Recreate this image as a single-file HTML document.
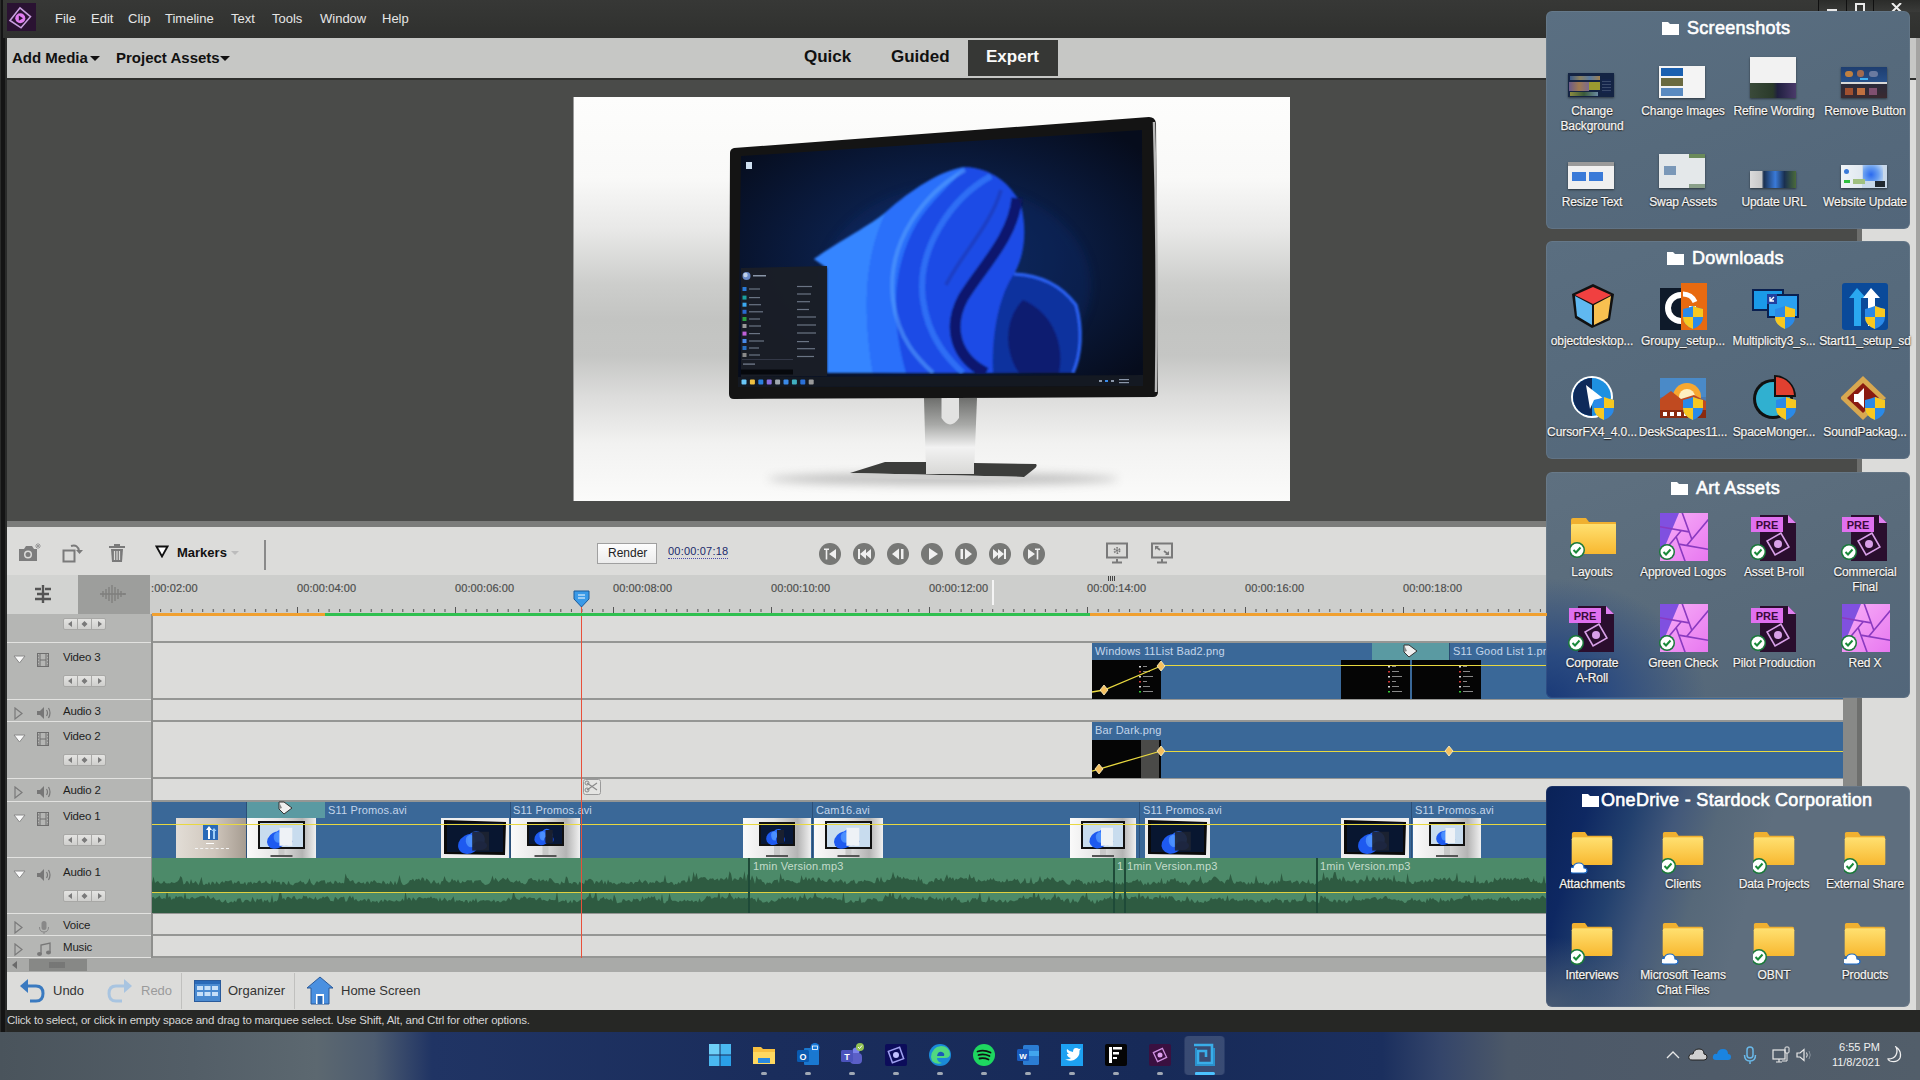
<!DOCTYPE html><html><head><meta charset="utf-8"><style>
*{margin:0;padding:0;box-sizing:border-box}
html,body{width:1920px;height:1080px;overflow:hidden;background:#1c1c1c;font-family:"Liberation Sans",sans-serif}
.a{position:absolute}
.menu span{position:absolute;top:11px;font-size:13px;color:#e6e6e6}
.tname{position:absolute;font-size:11.5px;letter-spacing:-0.2px;color:#1e1e1e;white-space:nowrap}
.tl{position:absolute;top:582px;font-size:11px;color:#4e4e4e;white-space:nowrap;letter-spacing:0.1px;-webkit-text-stroke:0.2px #4e4e4e}
.clab{position:absolute;font-size:11px;color:#c3d5ea;white-space:nowrap;letter-spacing:0.15px}
.alab{position:absolute;font-size:11px;color:#c4dccb;white-space:nowrap;letter-spacing:0.15px}
.fence{position:absolute;left:1546px;width:364px;border-radius:6px;overflow:hidden;box-shadow:inset 0 0 0 1px rgba(255,255,255,0.07)}
.ftitle{position:absolute;left:0;width:100%;text-align:center;color:#fff;font-size:17px;font-weight:bold;white-space:nowrap}
.flab{position:absolute;width:96px;text-align:center;color:#f4f4f4;font-size:12px;line-height:15px;-webkit-text-stroke:0.25px #f4f4f4;text-shadow:0 1px 1px #1a1a1a,0 0 2px #222;white-space:nowrap;letter-spacing:-0.1px}
</style></head><body>
<div class="a" style="left:0px;top:0px;width:7px;height:1032px;background:#2a2b2a;"></div>
<div class="a" style="left:1px;top:0px;width:4px;height:1032px;background:#141414;"></div>
<div class="a" style="left:3px;top:0px;width:1917px;height:38px;background:linear-gradient(#373836,#2f302e);"></div>
<div class="a" style="left:7px;top:3px;width:29px;height:28px;background:#2a1232;"></div>
<svg class="a" style="left:7px;top:3px" width="29" height="28" viewBox="0 0 29 28"><path d="M3 17.5 L13 4.8 L23.5 13.7 L14 24.8Z" fill="none" stroke="#c9a0e0" stroke-width="1.6"/><circle cx="13.3" cy="15.2" r="5" fill="#e07cf0"/><path d="M11.8 12.6 L16 15.2 L11.8 17.8Z" fill="#2a1232"/></svg>
<div class="menu">
<span style="left:55px">File</span>
<span style="left:91px">Edit</span>
<span style="left:128px">Clip</span>
<span style="left:165px">Timeline</span>
<span style="left:231px">Text</span>
<span style="left:272px">Tools</span>
<span style="left:320px">Window</span>
<span style="left:382px">Help</span>
</div>
<div class="a" style="left:1818px;top:0px;width:102px;height:12px;background:linear-gradient(#2b2c2a,#3a3b39);"></div>
<div class="a" style="left:1818px;top:0px;width:1px;height:12px;background:#101010;"></div>
<div class="a" style="left:1846px;top:0px;width:1px;height:12px;background:#101010;"></div>
<div class="a" style="left:1873px;top:0px;width:1px;height:12px;background:#101010;"></div>
<div class="a" style="left:1827px;top:9px;width:10px;height:2px;background:#e8e8e8;"></div>
<div class="a" style="left:1855px;top:3px;width:10px;height:8px;border:2px solid #e8e8e8;border-bottom:none"></div>
<svg class="a" style="left:1891px;top:3px" width="11" height="9"><path d="M1 0 L10 9 M10 0 L1 9" stroke="#eee" stroke-width="2"/></svg>
<div class="a" style="left:7px;top:38px;width:1913px;height:40px;background:#c6c7c5;"></div>
<div class="a" style="left:7px;top:78px;width:1913px;height:2px;background:#2e2f2d;"></div>
<div class="a" style="left:12px;top:49px;font-size:15px;color:#111;font-weight:bold;white-space:nowrap;">Add Media</div>
<div class="a" style="left:90px;top:56px;border-left:5px solid transparent;border-right:5px solid transparent;border-top:5px solid #111"></div>
<div class="a" style="left:116px;top:49px;font-size:15px;color:#111;font-weight:bold;white-space:nowrap;">Project Assets</div>
<div class="a" style="left:220px;top:56px;border-left:5px solid transparent;border-right:5px solid transparent;border-top:5px solid #111"></div>
<div class="a" style="left:804px;top:47px;font-size:17px;color:#111;font-weight:bold;white-space:nowrap;">Quick</div>
<div class="a" style="left:891px;top:47px;font-size:17px;color:#111;font-weight:bold;white-space:nowrap;">Guided</div>
<div class="a" style="left:968px;top:40px;width:90px;height:36px;background:#363735;"></div>
<div class="a" style="left:986px;top:47px;font-size:17px;color:#fafafa;font-weight:bold;white-space:nowrap;">Expert</div>
<div class="a" style="left:7px;top:80px;width:1850px;height:441px;background:#4a4b49;"></div>
<div class="a" style="left:1857px;top:80px;width:5px;height:878px;background:#6d6e6c;"></div>
<div class="a" style="left:1862px;top:80px;width:54px;height:892px;background:#dcdcda;"></div>
<div class="a" style="left:1862px;top:38px;width:54px;height:40px;background:#c6c7c5;"></div>
<div class="a" style="left:1916px;top:38px;width:4px;height:994px;background:#a4a4a2;"></div>
<div class="a" style="left:573px;top:97px;width:717px;height:404px;background:linear-gradient(#fdfdfc 0%,#f9f9f8 20%,#e8e8e7 33%,#cdcecc 46%,#c3c4c2 55%,#c5c6c4 64%,#dcdcdb 74%,#f2f2f1 86%,#fbfbfa 100%);border-left:1px solid #9a9a9a;overflow:hidden">
<svg width="717" height="403" viewBox="573 97 717 403" style="position:absolute;left:0;top:0">
<defs>
<radialGradient id="scr" cx="0.5" cy="0.5" r="0.65"><stop offset="0" stop-color="#123068"/><stop offset="0.45" stop-color="#0b1e46"/><stop offset="1" stop-color="#060c1c"/></radialGradient>
<linearGradient id="neck" x1="0" y1="0" x2="0" y2="1"><stop offset="0" stop-color="#6e6f6d"/><stop offset="0.35" stop-color="#a8a9a7"/><stop offset="0.65" stop-color="#f2f2f2"/><stop offset="1" stop-color="#d8d8d6"/></linearGradient>
<radialGradient id="bloom" cx="0.5" cy="0.5" r="0.5"><stop offset="0" stop-color="#2f6bff"/><stop offset="0.6" stop-color="#1d4fe0"/><stop offset="1" stop-color="#0d2a90"/></radialGradient>
</defs>
<ellipse cx="942" cy="479" rx="175" ry="6" fill="#7a7a7a" opacity="0.45" filter="url(#bl2)"/>
<path d="M923 398 L976 398 L973 474 L925 474Z" fill="url(#neck)"/>
<path d="M940.5 398 L958 398 L958 418 Q949 431 940.5 418Z" fill="#e2e2e1"/>
<path d="M884 462 L925 462 L925 474 L973 474 L973 463 L1035 464 Q1037 466 1033 469 L1023 477 L849 473Z" fill="#3c3d3b"/>
<path d="M849 473 L1023 477 L1018 481 L856 478Z" fill="#cfcfce"/>
<path d="M733 148 L1148 117 Q1154 117 1155 123 L1157 392 Q1157 397 1152 397 L733 399 Q728 399 728 394 L729 153 Q729 149 733 148Z" fill="#141414"/>
<path d="M1153 122 Q1157 255 1155 392" stroke="#b8b8b8" stroke-width="2.5" fill="none"/>
<path d="M740 156 L1141 130 L1142 386 L737 387Z" fill="url(#scr)"/>

<clipPath id="sc"><path d="M740 156 L1141 130 L1142 373 L737 375Z"/></clipPath><filter id="bl"><feGaussianBlur stdDeviation="2.2"/></filter><filter id="bl1"><feGaussianBlur stdDeviation="1.3"/></filter><g clip-path="url(#sc)">
<filter id="bl2" x="-50%" y="-300%" width="200%" height="700%"><feGaussianBlur stdDeviation="5"/></filter>
<ellipse cx="955" cy="285" rx="135" ry="100" fill="#0f2660" opacity="0.45" filter="url(#bl2)"/>
<g filter="url(#bl1)">
<path d="M813 259 C 840 240, 870 225, 885 212 C 910 190, 940 170, 964 167 C 990 168, 1010 183, 1020 205 C 1026 230, 1024 255, 1013 274 C 1040 275, 1060 285, 1075 305 C 1082 330, 1080 355, 1072 373 L 826 373 L 826 268Z" fill="#1d4ce6"/>
<path d="M813 259 C 840 240, 870 225, 885 212 C 870 245, 858 290, 872 373 L 826 373 L 826 268Z" fill="#3585ff"/>
<path d="M885 212 C 870 245, 858 290, 872 373 L 905 373 C 890 320, 890 270, 915 225 C 930 200, 950 185, 964 167 C 940 170, 910 190, 885 212Z" fill="#2a70fa"/>
<path d="M964 170 C 925 192, 885 240, 892 300 C 897 340, 918 360, 932 373" fill="none" stroke="#5aa6ff" stroke-width="4" opacity="0.55"/>
<path d="M990 176 C 950 198, 915 250, 922 300 C 927 338, 948 360, 962 373" fill="none" stroke="#3a86ff" stroke-width="6" opacity="0.6"/>
<path d="M1016 198 C 1012 238, 980 268, 962 298 C 946 328, 955 358, 985 373" fill="none" stroke="#0a1460" stroke-width="11" opacity="0.9"/>
<path d="M1000 190 C 990 225, 960 255, 945 285" fill="none" stroke="#1a3ab8" stroke-width="4" opacity="0.7"/>
<path d="M1013 274 C 1040 275, 1060 285, 1075 305 C 1082 330, 1080 355, 1072 373 L 992 373 C 990 335, 998 295, 1013 274Z" fill="#11309e"/>
<path d="M1022 300 C 1004 318, 1002 350, 1018 373 L 1058 373 C 1064 342, 1050 312, 1022 300Z" fill="#0a1c70"/>
<path d="M1013 274 C 1040 275, 1060 285, 1075 305 C 1082 330, 1080 355, 1072 373" fill="none" stroke="#2a62f4" stroke-width="3"/>
</g>
</g><path d="M740 268 L826 266 L826 376 L740 377Z" fill="#1a1e26" opacity="0.96"/><circle cx="745.5" cy="276" r="4" fill="#6a8ac8"/><circle cx="744.5" cy="275" r="2.2" fill="#c0d0e8"/><rect x="752" y="275" width="13" height="1.5" fill="#8a96a8"/><rect x="741.5" y="287" width="4" height="4" fill="#2a7ad8"/><rect x="748" y="288.4" width="11" height="1.2" fill="#6a7484"/><rect x="741.5" y="295.6" width="4" height="4" fill="#1aa0a0"/><rect x="748" y="297.0" width="11" height="1.2" fill="#6a7484"/><rect x="741.5" y="302.7" width="4" height="4" fill="#3aa8f0"/><rect x="748" y="304.09999999999997" width="12" height="1.2" fill="#6a7484"/><rect x="741.5" y="309.8" width="4" height="4" fill="#2a6ad0"/><rect x="748" y="311.2" width="14" height="1.2" fill="#6a7484"/><rect x="741.5" y="317" width="4" height="4" fill="#2aa040"/><rect x="748" y="318.4" width="11" height="1.2" fill="#6a7484"/><rect x="741.5" y="324" width="4" height="4" fill="#9a9a9a"/><rect x="748" y="325.4" width="12" height="1.2" fill="#6a7484"/><rect x="741.5" y="331.6" width="4" height="4" fill="#c060d8"/><rect x="748" y="333.0" width="11" height="1.2" fill="#6a7484"/><rect x="741.5" y="339" width="4" height="4" fill="#4a8ae8"/><rect x="748" y="340.4" width="15" height="1.2" fill="#6a7484"/><rect x="741.5" y="346" width="4" height="4" fill="#2a70c0"/><rect x="748" y="347.4" width="10" height="1.2" fill="#6a7484"/><rect x="741.5" y="353" width="4" height="4" fill="#8a8a8a"/><rect x="748" y="354.4" width="11" height="1.2" fill="#6a7484"/><rect x="796" y="285.9" width="15" height="1.2" fill="#6a7484"/><rect x="796" y="293.4" width="14" height="1.2" fill="#6a7484"/><rect x="796" y="301.09999999999997" width="13" height="1.2" fill="#6a7484"/><rect x="796" y="308.9" width="12" height="1.2" fill="#6a7484"/><rect x="796" y="316.4" width="19" height="1.2" fill="#6a7484"/><rect x="796" y="324.4" width="19" height="1.2" fill="#6a7484"/><rect x="796" y="332.4" width="19" height="1.2" fill="#6a7484"/><rect x="796" y="341.0" width="12" height="1.2" fill="#6a7484"/><rect x="796" y="348.09999999999997" width="18" height="1.2" fill="#6a7484"/><rect x="796" y="355.9" width="17" height="1.2" fill="#6a7484"/><rect x="741" y="359" width="51" height="0.8" fill="#3a4050"/><rect x="742" y="363.5" width="12" height="1.2" fill="#7a8494"/><rect x="740" y="369.5" width="52" height="5" fill="#06080c"/><path d="M737 377 L1142 375 L1142 386 L737 387Z" fill="#141922"/><rect x="740.5" y="379.5" width="5" height="5" rx="1" fill="#6ac8f8"/><rect x="748.9" y="379.5" width="5" height="5" rx="1" fill="#f0c040"/><rect x="757.3" y="379.5" width="5" height="5" rx="1" fill="#2a80e0"/><rect x="765.7" y="379.5" width="5" height="5" rx="1" fill="#8a70e0"/><rect x="774.1" y="379.5" width="5" height="5" rx="1" fill="#a0a8b0"/><rect x="782.5" y="379.5" width="5" height="5" rx="1" fill="#3a8ae8"/><rect x="790.9" y="379.5" width="5" height="5" rx="1" fill="#40b0c0"/><rect x="799.3" y="379.5" width="5" height="5" rx="1" fill="#2a70d8"/><rect x="807.7" y="379.5" width="5" height="5" rx="1" fill="#9a9a9a"/><g fill="#8a96a8"><rect x="1098" y="380" width="3" height="2"/><rect x="1104" y="380" width="3" height="2" fill="#3a8ae8"/><rect x="1110" y="380" width="3" height="2"/><rect x="1118" y="379" width="10" height="1.2"/><rect x="1118" y="382" width="10" height="1.2"/></g><rect x="745" y="162" width="6" height="7" fill="#cfe0f0"/>
</svg>
</div>
<div class="a" style="left:7px;top:521px;width:1855px;height:6px;background:#7b7c7a;"></div>
<div class="a" style="left:7px;top:527px;width:1855px;height:48px;background:#dcdcda;"></div>
<svg class="a" style="left:17px;top:541px" width="26" height="22" viewBox="0 0 26 22"><path d="M2 8 L7 8 L9 5 L15 5 L17 8 L20 8 L20 20 L2 20Z" fill="#7d7d7d"/><circle cx="11" cy="13.5" r="4" fill="#dcdcda"/><circle cx="11" cy="13.5" r="2.5" fill="#7d7d7d"/><path d="M21 2 L21 8 M18 5 L24 5 M19 3 L23 7 M23 3 L19 7" stroke="#9a9a9a" stroke-width="1"/></svg>
<svg class="a" style="left:62px;top:542px" width="24" height="22" viewBox="0 0 24 22"><rect x="1.5" y="8.5" width="11" height="11" fill="none" stroke="#7a7a7a" stroke-width="2"/><path d="M9 4 Q16 2 17 9" fill="none" stroke="#7a7a7a" stroke-width="2"/><path d="M14 8 L17.5 12 L21 8Z" fill="#7a7a7a"/></svg>
<svg class="a" style="left:108px;top:543px" width="18" height="20" viewBox="0 0 18 20"><rect x="1" y="3" width="16" height="2" fill="#7a7a7a"/><rect x="6" y="1" width="6" height="2" fill="#7a7a7a"/><path d="M3 6 L15 6 L14 19 L4 19Z" fill="#7a7a7a"/><path d="M6.5 8 L6.5 17 M9 8 L9 17 M11.5 8 L11.5 17" stroke="#dcdcda" stroke-width="1.2"/></svg>
<svg class="a" style="left:155px;top:545px" width="14" height="13" viewBox="0 0 14 13"><path d="M1.5 1.5 L12.5 1.5 L7 11.5Z" fill="#fff" stroke="#111" stroke-width="1.8"/></svg>
<div class="a" style="left:177px;top:545px;font-size:13px;color:#111;font-weight:bold;white-space:nowrap;">Markers</div>
<svg class="a" style="left:231px;top:551px" width="8" height="5"><path d="M0 0 L8 0 L4 4Z" fill="#bcbcbc"/></svg>
<div class="a" style="left:264px;top:540px;width:2px;height:30px;background:#8a8a8a;"></div>
<div class="a" style="left:597px;top:543px;width:60px;height:21px;background:linear-gradient(#fdfdfd,#ececec);border:1px solid #a0a0a0"></div>
<div class="a" style="left:608px;top:546px;font-size:12px;color:#222;font-weight:normal;white-space:nowrap;">Render</div>
<div class="a" style="left:668px;top:545px;font-size:11px;color:#1a2a6a;font-weight:normal;white-space:nowrap;letter-spacing:0.2px">00:00:07:18</div>
<div class="a" style="left:668px;top:558px;width:60px;border-top:1px dotted #4a4aaa"></div>
<svg class="a" style="left:818px;top:542px" width="24" height="24" viewBox="-12 -12 24 24"><circle r="11" fill="#777876"/><path d="M-6 -5.5 L-1 -5.5 L-1 -4 L-2.7 -4 L-2.7 5.5 L-4.3 5.5 L-4.3 -4 L-6 -4Z M6 -5 L6 5 L-1 0Z" fill="#f0f0f0"/></svg>
<svg class="a" style="left:852px;top:542px" width="24" height="24" viewBox="-12 -12 24 24"><circle r="11" fill="#777876"/><path d="M-6 -5 L-4 -5 L-4 5 L-6 5Z M2 -5 L2 5 L-4 0Z M7 -5 L7 5 L1 0Z" fill="#f0f0f0"/></svg>
<svg class="a" style="left:886px;top:542px" width="24" height="24" viewBox="-12 -12 24 24"><circle r="11" fill="#777876"/><path d="M1 -5.5 L1 5.5 L-6 0Z M3 -5 L5.5 -5 L5.5 5 L3 5Z" fill="#f0f0f0"/></svg>
<svg class="a" style="left:920px;top:542px" width="24" height="24" viewBox="-12 -12 24 24"><circle r="11" fill="#777876"/><path d="M-3 -6 L6 0 L-3 6Z" fill="#f0f0f0"/></svg>
<svg class="a" style="left:954px;top:542px" width="24" height="24" viewBox="-12 -12 24 24"><circle r="11" fill="#777876"/><path d="M-1 -5.5 L-1 5.5 L6 0Z M-5.5 -5 L-3 -5 L-3 5 L-5.5 5Z" fill="#f0f0f0"/></svg>
<svg class="a" style="left:988px;top:542px" width="24" height="24" viewBox="-12 -12 24 24"><circle r="11" fill="#777876"/><path d="M-7 -5 L-7 5 L-1 0Z M-2 -5 L-2 5 L4 0Z M4 -5 L6 -5 L6 5 L4 5Z" fill="#f0f0f0"/></svg>
<svg class="a" style="left:1022px;top:542px" width="24" height="24" viewBox="-12 -12 24 24"><circle r="11" fill="#777876"/><path d="M6 -5.5 L1 -5.5 L1 -4 L2.7 -4 L2.7 5.5 L4.3 5.5 L4.3 -4 L6 -4Z M-6 -5 L-6 5 L1 0Z" fill="#f0f0f0"/></svg>
<svg class="a" style="left:1105px;top:542px" width="24" height="22" viewBox="0 0 24 22"><rect x="2" y="1.5" width="20" height="14" fill="none" stroke="#7a7a7a" stroke-width="2"/><path d="M12 17 L12 20 M7 20.5 L17 20.5" stroke="#7a7a7a" stroke-width="2"/><circle cx="12" cy="8.5" r="2.6" fill="none" stroke="#7a7a7a" stroke-width="1.8" stroke-dasharray="1.6 1.2"/><circle cx="12" cy="8.5" r="1.2" fill="#7a7a7a"/></svg>
<svg class="a" style="left:1150px;top:542px" width="24" height="22" viewBox="0 0 24 22"><rect x="2" y="1.5" width="20" height="14" fill="none" stroke="#7a7a7a" stroke-width="2"/><path d="M12 17 L12 20 M7 20.5 L17 20.5" stroke="#7a7a7a" stroke-width="2"/><path d="M5.5 4.5 L10 8 M14 9 L18.5 12.5" stroke="#7a7a7a" stroke-width="1.8"/><path d="M5 4 L9 4 L5 8Z M19 13 L15 13 L19 9Z" fill="#7a7a7a"/></svg>
<div class="a" style="left:7px;top:575px;width:71px;height:39px;background:#d2d3d1;"></div>
<div class="a" style="left:78px;top:575px;width:72px;height:39px;background:#9d9e9c;"></div>
<div class="a" style="left:150px;top:575px;width:1693px;height:39px;background:#cdcecc;"></div>
<svg class="a" style="left:32px;top:583px" width="22" height="22" viewBox="0 0 22 22"><path d="M3 6 L9 6 M13 6 L19 6 M5 11 L17 11 M3 16 L19 16 M11 2 L11 20" stroke="#555" stroke-width="2.4"/></svg>
<svg class="a" style="left:98px;top:583px" width="30" height="22" viewBox="0 0 30 22"><path d="M2 11 L28 11 M5 8 L5 14 M8 6 L8 16 M11 4 L11 18 M14 2 L14 20 M17 4 L17 18 M20 6 L20 16 M23 8 L23 14 M26 10 L26 12" stroke="#7e7e7c" stroke-width="1.3"/></svg>
<svg class="a" style="left:0;top:0" width="1920" height="1080"><g fill="#555"><rect x="160.1" y="609" width="1" height="3"/><rect x="170.6" y="609" width="1" height="3"/><rect x="181.1" y="609" width="1" height="3"/><rect x="191.7" y="609" width="1" height="3"/><rect x="202.2" y="609" width="1" height="3"/><rect x="212.7" y="609" width="1" height="3"/><rect x="223.3" y="609" width="1" height="3"/><rect x="233.8" y="609" width="1" height="3"/><rect x="244.3" y="609" width="1" height="3"/><rect x="254.9" y="609" width="1" height="3"/><rect x="265.4" y="609" width="1" height="3"/><rect x="275.9" y="609" width="1" height="3"/><rect x="286.5" y="609" width="1" height="3"/><rect x="297.0" y="607" width="1" height="6"/><rect x="307.5" y="609" width="1" height="3"/><rect x="318.1" y="609" width="1" height="3"/><rect x="328.6" y="609" width="1" height="3"/><rect x="339.1" y="609" width="1" height="3"/><rect x="349.7" y="609" width="1" height="3"/><rect x="360.2" y="609" width="1" height="3"/><rect x="370.7" y="609" width="1" height="3"/><rect x="381.3" y="609" width="1" height="3"/><rect x="391.8" y="609" width="1" height="3"/><rect x="402.3" y="609" width="1" height="3"/><rect x="412.9" y="609" width="1" height="3"/><rect x="423.4" y="609" width="1" height="3"/><rect x="433.9" y="609" width="1" height="3"/><rect x="444.5" y="609" width="1" height="3"/><rect x="455.0" y="607" width="1" height="6"/><rect x="465.5" y="609" width="1" height="3"/><rect x="476.1" y="609" width="1" height="3"/><rect x="486.6" y="609" width="1" height="3"/><rect x="497.1" y="609" width="1" height="3"/><rect x="507.7" y="609" width="1" height="3"/><rect x="518.2" y="609" width="1" height="3"/><rect x="528.7" y="609" width="1" height="3"/><rect x="539.3" y="609" width="1" height="3"/><rect x="549.8" y="609" width="1" height="3"/><rect x="560.3" y="609" width="1" height="3"/><rect x="570.9" y="609" width="1" height="3"/><rect x="581.4" y="609" width="1" height="3"/><rect x="591.9" y="609" width="1" height="3"/><rect x="602.5" y="609" width="1" height="3"/><rect x="613.0" y="607" width="1" height="6"/><rect x="623.5" y="609" width="1" height="3"/><rect x="634.1" y="609" width="1" height="3"/><rect x="644.6" y="609" width="1" height="3"/><rect x="655.1" y="609" width="1" height="3"/><rect x="665.7" y="609" width="1" height="3"/><rect x="676.2" y="609" width="1" height="3"/><rect x="686.7" y="609" width="1" height="3"/><rect x="697.3" y="609" width="1" height="3"/><rect x="707.8" y="609" width="1" height="3"/><rect x="718.3" y="609" width="1" height="3"/><rect x="728.9" y="609" width="1" height="3"/><rect x="739.4" y="609" width="1" height="3"/><rect x="749.9" y="609" width="1" height="3"/><rect x="760.5" y="609" width="1" height="3"/><rect x="771.0" y="607" width="1" height="6"/><rect x="781.5" y="609" width="1" height="3"/><rect x="792.1" y="609" width="1" height="3"/><rect x="802.6" y="609" width="1" height="3"/><rect x="813.1" y="609" width="1" height="3"/><rect x="823.7" y="609" width="1" height="3"/><rect x="834.2" y="609" width="1" height="3"/><rect x="844.7" y="609" width="1" height="3"/><rect x="855.3" y="609" width="1" height="3"/><rect x="865.8" y="609" width="1" height="3"/><rect x="876.3" y="609" width="1" height="3"/><rect x="886.9" y="609" width="1" height="3"/><rect x="897.4" y="609" width="1" height="3"/><rect x="907.9" y="609" width="1" height="3"/><rect x="918.5" y="609" width="1" height="3"/><rect x="929.0" y="607" width="1" height="6"/><rect x="939.5" y="609" width="1" height="3"/><rect x="950.1" y="609" width="1" height="3"/><rect x="960.6" y="609" width="1" height="3"/><rect x="971.1" y="609" width="1" height="3"/><rect x="981.7" y="609" width="1" height="3"/><rect x="992.2" y="609" width="1" height="3"/><rect x="1002.7" y="609" width="1" height="3"/><rect x="1013.3" y="609" width="1" height="3"/><rect x="1023.8" y="609" width="1" height="3"/><rect x="1034.3" y="609" width="1" height="3"/><rect x="1044.9" y="609" width="1" height="3"/><rect x="1055.4" y="609" width="1" height="3"/><rect x="1065.9" y="609" width="1" height="3"/><rect x="1076.5" y="609" width="1" height="3"/><rect x="1087.0" y="607" width="1" height="6"/><rect x="1097.5" y="609" width="1" height="3"/><rect x="1108.1" y="609" width="1" height="3"/><rect x="1118.6" y="609" width="1" height="3"/><rect x="1129.1" y="609" width="1" height="3"/><rect x="1139.7" y="609" width="1" height="3"/><rect x="1150.2" y="609" width="1" height="3"/><rect x="1160.7" y="609" width="1" height="3"/><rect x="1171.3" y="609" width="1" height="3"/><rect x="1181.8" y="609" width="1" height="3"/><rect x="1192.3" y="609" width="1" height="3"/><rect x="1202.9" y="609" width="1" height="3"/><rect x="1213.4" y="609" width="1" height="3"/><rect x="1223.9" y="609" width="1" height="3"/><rect x="1234.5" y="609" width="1" height="3"/><rect x="1245.0" y="607" width="1" height="6"/><rect x="1255.5" y="609" width="1" height="3"/><rect x="1266.1" y="609" width="1" height="3"/><rect x="1276.6" y="609" width="1" height="3"/><rect x="1287.1" y="609" width="1" height="3"/><rect x="1297.7" y="609" width="1" height="3"/><rect x="1308.2" y="609" width="1" height="3"/><rect x="1318.7" y="609" width="1" height="3"/><rect x="1329.3" y="609" width="1" height="3"/><rect x="1339.8" y="609" width="1" height="3"/><rect x="1350.3" y="609" width="1" height="3"/><rect x="1360.9" y="609" width="1" height="3"/><rect x="1371.4" y="609" width="1" height="3"/><rect x="1381.9" y="609" width="1" height="3"/><rect x="1392.5" y="609" width="1" height="3"/><rect x="1403.0" y="607" width="1" height="6"/><rect x="1413.5" y="609" width="1" height="3"/><rect x="1424.1" y="609" width="1" height="3"/><rect x="1434.6" y="609" width="1" height="3"/><rect x="1445.1" y="609" width="1" height="3"/><rect x="1455.7" y="609" width="1" height="3"/><rect x="1466.2" y="609" width="1" height="3"/><rect x="1476.7" y="609" width="1" height="3"/><rect x="1487.3" y="609" width="1" height="3"/><rect x="1497.8" y="609" width="1" height="3"/><rect x="1508.3" y="609" width="1" height="3"/><rect x="1518.9" y="609" width="1" height="3"/><rect x="1529.4" y="609" width="1" height="3"/><rect x="1539.9" y="609" width="1" height="3"/><rect x="1550.5" y="609" width="1" height="3"/><rect x="1561.0" y="607" width="1" height="6"/><rect x="1571.5" y="609" width="1" height="3"/><rect x="1582.1" y="609" width="1" height="3"/><rect x="1592.6" y="609" width="1" height="3"/><rect x="1603.1" y="609" width="1" height="3"/><rect x="1613.7" y="609" width="1" height="3"/><rect x="1624.2" y="609" width="1" height="3"/><rect x="1634.7" y="609" width="1" height="3"/><rect x="1645.3" y="609" width="1" height="3"/><rect x="1655.8" y="609" width="1" height="3"/><rect x="1666.3" y="609" width="1" height="3"/><rect x="1676.9" y="609" width="1" height="3"/><rect x="1687.4" y="609" width="1" height="3"/><rect x="1697.9" y="609" width="1" height="3"/><rect x="1708.5" y="609" width="1" height="3"/><rect x="1719.0" y="607" width="1" height="6"/><rect x="1729.5" y="609" width="1" height="3"/><rect x="1740.1" y="609" width="1" height="3"/><rect x="1750.6" y="609" width="1" height="3"/><rect x="1761.1" y="609" width="1" height="3"/><rect x="1771.7" y="609" width="1" height="3"/><rect x="1782.2" y="609" width="1" height="3"/><rect x="1792.7" y="609" width="1" height="3"/><rect x="1803.3" y="609" width="1" height="3"/><rect x="1813.8" y="609" width="1" height="3"/><rect x="1824.3" y="609" width="1" height="3"/><rect x="1834.9" y="609" width="1" height="3"/></g></svg>
<div class="tl" style="left:297px">00:00:04:00</div>
<div class="tl" style="left:455px">00:00:06:00</div>
<div class="tl" style="left:613px">00:00:08:00</div>
<div class="tl" style="left:771px">00:00:10:00</div>
<div class="tl" style="left:929px">00:00:12:00</div>
<div class="tl" style="left:1087px">00:00:14:00</div>
<div class="tl" style="left:1245px">00:00:16:00</div>
<div class="tl" style="left:1403px">00:00:18:00</div>
<div class="tl" style="left:151px">:00:02:00</div>
<div class="a" style="left:152px;top:613px;width:173px;height:3px;background:#f0a030;z-index:5"></div>
<div class="a" style="left:325px;top:613px;width:765px;height:3px;background:#30c050;z-index:5"></div>
<div class="a" style="left:1090px;top:613px;width:457px;height:3px;background:#f0a030;z-index:5"></div>
<div class="a" style="left:992px;top:580px;width:2px;height:25px;background:#f4f4f4;"></div>
<svg class="a" style="left:1107px;top:576px" width="10" height="5"><path d="M1.5 0 L1.5 5 M3.5 0 L3.5 5 M5.5 0 L5.5 5 M7.5 0 L7.5 5" stroke="#444" stroke-width="1"/></svg>
<div class="a" style="left:7px;top:614px;width:145px;height:29px;background:#b5b6b4;"></div>
<div class="a" style="left:152px;top:614px;width:1691px;height:29px;background:#dcdcda;"></div>
<div class="a" style="left:7px;top:642px;width:145px;height:1px;background:#e2e2e0;"></div>
<div class="a" style="left:152px;top:641px;width:1691px;height:2px;background:#959694;"></div>
<div class="a" style="left:151px;top:614px;width:2px;height:29px;background:#8e8f8d;"></div>
<div class="a" style="left:63px;top:618px;width:43px;height:12px;background:linear-gradient(#e4e4e2,#cfcfcd);border:1px solid #a8a8a6;border-radius:2px"></div>
<svg class="a" style="left:63px;top:618px" width="43" height="12"><path d="M14.5 1 L14.5 11 M28.5 1 L28.5 11" stroke="#a8a8a6"/><path d="M9 3 L9 9 L5 6Z M35 3 L35 9 L39 6Z M21.5 3 L24.5 6 L21.5 9 L18.5 6Z" fill="#7a7a7a"/></svg>
<div class="a" style="left:7px;top:643px;width:145px;height:57px;background:#b5b6b4;"></div>
<div class="a" style="left:152px;top:643px;width:1691px;height:57px;background:#dcdcda;"></div>
<div class="a" style="left:7px;top:699px;width:145px;height:1px;background:#e2e2e0;"></div>
<div class="a" style="left:152px;top:698px;width:1691px;height:2px;background:#959694;"></div>
<div class="a" style="left:151px;top:643px;width:2px;height:57px;background:#8e8f8d;"></div>
<svg class="a" style="left:13px;top:655px" width="13" height="9"><path d="M1 1 L12 1 L6.5 8Z" fill="#fafafa" stroke="#8a8a8a" stroke-width="1"/></svg>
<svg class="a" style="left:37px;top:653px" width="12" height="14"><rect x="0.5" y="0.5" width="11" height="13" fill="none" stroke="#6e6e6e"/><path d="M3 1 L3 13 M9 1 L9 13 M3 7 L9 7" stroke="#6e6e6e"/><path d="M1 3 L2 3 M1 6 L2 6 M1 9 L2 9 M1 12 L2 12 M10 3 L11 3 M10 6 L11 6 M10 9 L11 9 M10 12 L11 12" stroke="#6e6e6e"/></svg>
<div class="tname" style="left:63px;top:651px">Video 3</div>
<div class="a" style="left:63px;top:675px;width:43px;height:12px;background:linear-gradient(#e4e4e2,#cfcfcd);border:1px solid #a8a8a6;border-radius:2px"></div>
<svg class="a" style="left:63px;top:675px" width="43" height="12"><path d="M14.5 1 L14.5 11 M28.5 1 L28.5 11" stroke="#a8a8a6"/><path d="M9 3 L9 9 L5 6Z M35 3 L35 9 L39 6Z M21.5 3 L24.5 6 L21.5 9 L18.5 6Z" fill="#7a7a7a"/></svg>
<div class="a" style="left:7px;top:700px;width:145px;height:22px;background:#b5b6b4;"></div>
<div class="a" style="left:152px;top:700px;width:1691px;height:22px;background:#dcdcda;"></div>
<div class="a" style="left:7px;top:721px;width:145px;height:1px;background:#e2e2e0;"></div>
<div class="a" style="left:152px;top:720px;width:1691px;height:2px;background:#959694;"></div>
<div class="a" style="left:151px;top:700px;width:2px;height:22px;background:#8e8f8d;"></div>
<svg class="a" style="left:14px;top:707px" width="9" height="13"><path d="M1 1 L8 6.5 L1 12Z" fill="none" stroke="#7a7a7a" stroke-width="1.2"/></svg>
<svg class="a" style="left:36px;top:706px" width="16" height="14"><path d="M1 5 L4 5 L8 1 L8 13 L4 9 L1 9Z" fill="#777"/><path d="M10.5 4 Q12.5 7 10.5 10 M12.5 2 Q15.5 7 12.5 12" fill="none" stroke="#777" stroke-width="1.2"/></svg>
<div class="tname" style="left:63px;top:705px">Audio 3</div>
<div class="a" style="left:7px;top:722px;width:145px;height:57px;background:#b5b6b4;"></div>
<div class="a" style="left:152px;top:722px;width:1691px;height:57px;background:#dcdcda;"></div>
<div class="a" style="left:7px;top:778px;width:145px;height:1px;background:#e2e2e0;"></div>
<div class="a" style="left:152px;top:777px;width:1691px;height:2px;background:#959694;"></div>
<div class="a" style="left:151px;top:722px;width:2px;height:57px;background:#8e8f8d;"></div>
<svg class="a" style="left:13px;top:734px" width="13" height="9"><path d="M1 1 L12 1 L6.5 8Z" fill="#fafafa" stroke="#8a8a8a" stroke-width="1"/></svg>
<svg class="a" style="left:37px;top:732px" width="12" height="14"><rect x="0.5" y="0.5" width="11" height="13" fill="none" stroke="#6e6e6e"/><path d="M3 1 L3 13 M9 1 L9 13 M3 7 L9 7" stroke="#6e6e6e"/><path d="M1 3 L2 3 M1 6 L2 6 M1 9 L2 9 M1 12 L2 12 M10 3 L11 3 M10 6 L11 6 M10 9 L11 9 M10 12 L11 12" stroke="#6e6e6e"/></svg>
<div class="tname" style="left:63px;top:730px">Video 2</div>
<div class="a" style="left:63px;top:754px;width:43px;height:12px;background:linear-gradient(#e4e4e2,#cfcfcd);border:1px solid #a8a8a6;border-radius:2px"></div>
<svg class="a" style="left:63px;top:754px" width="43" height="12"><path d="M14.5 1 L14.5 11 M28.5 1 L28.5 11" stroke="#a8a8a6"/><path d="M9 3 L9 9 L5 6Z M35 3 L35 9 L39 6Z M21.5 3 L24.5 6 L21.5 9 L18.5 6Z" fill="#7a7a7a"/></svg>
<div class="a" style="left:7px;top:779px;width:145px;height:23px;background:#b5b6b4;"></div>
<div class="a" style="left:152px;top:779px;width:1691px;height:23px;background:#dcdcda;"></div>
<div class="a" style="left:7px;top:801px;width:145px;height:1px;background:#e2e2e0;"></div>
<div class="a" style="left:152px;top:800px;width:1691px;height:2px;background:#959694;"></div>
<div class="a" style="left:151px;top:779px;width:2px;height:23px;background:#8e8f8d;"></div>
<svg class="a" style="left:14px;top:786px" width="9" height="13"><path d="M1 1 L8 6.5 L1 12Z" fill="none" stroke="#7a7a7a" stroke-width="1.2"/></svg>
<svg class="a" style="left:36px;top:785px" width="16" height="14"><path d="M1 5 L4 5 L8 1 L8 13 L4 9 L1 9Z" fill="#777"/><path d="M10.5 4 Q12.5 7 10.5 10 M12.5 2 Q15.5 7 12.5 12" fill="none" stroke="#777" stroke-width="1.2"/></svg>
<div class="tname" style="left:63px;top:784px">Audio 2</div>
<div class="a" style="left:7px;top:802px;width:145px;height:56px;background:#b5b6b4;"></div>
<div class="a" style="left:152px;top:802px;width:1691px;height:56px;background:#dcdcda;"></div>
<div class="a" style="left:7px;top:857px;width:145px;height:1px;background:#e2e2e0;"></div>
<div class="a" style="left:152px;top:856px;width:1691px;height:2px;background:#959694;"></div>
<div class="a" style="left:151px;top:802px;width:2px;height:56px;background:#8e8f8d;"></div>
<svg class="a" style="left:13px;top:814px" width="13" height="9"><path d="M1 1 L12 1 L6.5 8Z" fill="#fafafa" stroke="#8a8a8a" stroke-width="1"/></svg>
<svg class="a" style="left:37px;top:812px" width="12" height="14"><rect x="0.5" y="0.5" width="11" height="13" fill="none" stroke="#6e6e6e"/><path d="M3 1 L3 13 M9 1 L9 13 M3 7 L9 7" stroke="#6e6e6e"/><path d="M1 3 L2 3 M1 6 L2 6 M1 9 L2 9 M1 12 L2 12 M10 3 L11 3 M10 6 L11 6 M10 9 L11 9 M10 12 L11 12" stroke="#6e6e6e"/></svg>
<div class="tname" style="left:63px;top:810px">Video 1</div>
<div class="a" style="left:63px;top:834px;width:43px;height:12px;background:linear-gradient(#e4e4e2,#cfcfcd);border:1px solid #a8a8a6;border-radius:2px"></div>
<svg class="a" style="left:63px;top:834px" width="43" height="12"><path d="M14.5 1 L14.5 11 M28.5 1 L28.5 11" stroke="#a8a8a6"/><path d="M9 3 L9 9 L5 6Z M35 3 L35 9 L39 6Z M21.5 3 L24.5 6 L21.5 9 L18.5 6Z" fill="#7a7a7a"/></svg>
<div class="a" style="left:7px;top:858px;width:145px;height:56px;background:#b5b6b4;"></div>
<div class="a" style="left:152px;top:858px;width:1691px;height:56px;background:#dcdcda;"></div>
<div class="a" style="left:7px;top:913px;width:145px;height:1px;background:#e2e2e0;"></div>
<div class="a" style="left:152px;top:912px;width:1691px;height:2px;background:#959694;"></div>
<div class="a" style="left:151px;top:858px;width:2px;height:56px;background:#8e8f8d;"></div>
<svg class="a" style="left:13px;top:870px" width="13" height="9"><path d="M1 1 L12 1 L6.5 8Z" fill="#fafafa" stroke="#8a8a8a" stroke-width="1"/></svg>
<svg class="a" style="left:36px;top:868px" width="16" height="14"><path d="M1 5 L4 5 L8 1 L8 13 L4 9 L1 9Z" fill="#777"/><path d="M10.5 4 Q12.5 7 10.5 10 M12.5 2 Q15.5 7 12.5 12" fill="none" stroke="#777" stroke-width="1.2"/></svg>
<div class="tname" style="left:63px;top:866px">Audio 1</div>
<div class="a" style="left:63px;top:890px;width:43px;height:12px;background:linear-gradient(#e4e4e2,#cfcfcd);border:1px solid #a8a8a6;border-radius:2px"></div>
<svg class="a" style="left:63px;top:890px" width="43" height="12"><path d="M14.5 1 L14.5 11 M28.5 1 L28.5 11" stroke="#a8a8a6"/><path d="M9 3 L9 9 L5 6Z M35 3 L35 9 L39 6Z M21.5 3 L24.5 6 L21.5 9 L18.5 6Z" fill="#7a7a7a"/></svg>
<div class="a" style="left:7px;top:914px;width:145px;height:22px;background:#b5b6b4;"></div>
<div class="a" style="left:152px;top:914px;width:1691px;height:22px;background:#dcdcda;"></div>
<div class="a" style="left:7px;top:935px;width:145px;height:1px;background:#e2e2e0;"></div>
<div class="a" style="left:152px;top:934px;width:1691px;height:2px;background:#959694;"></div>
<div class="a" style="left:151px;top:914px;width:2px;height:22px;background:#8e8f8d;"></div>
<svg class="a" style="left:14px;top:921px" width="9" height="13"><path d="M1 1 L8 6.5 L1 12Z" fill="none" stroke="#7a7a7a" stroke-width="1.2"/></svg>
<svg class="a" style="left:38px;top:920px" width="12" height="15"><rect x="3.5" y="1" width="5" height="9" rx="2.5" fill="#888"/><path d="M1.5 7 Q1.5 12 6 12 Q10.5 12 10.5 7 M6 12 L6 14" fill="none" stroke="#888"/></svg>
<div class="tname" style="left:63px;top:919px">Voice</div>
<div class="a" style="left:7px;top:936px;width:145px;height:22px;background:#b5b6b4;"></div>
<div class="a" style="left:152px;top:936px;width:1691px;height:22px;background:#dcdcda;"></div>
<div class="a" style="left:7px;top:957px;width:145px;height:1px;background:#e2e2e0;"></div>
<div class="a" style="left:152px;top:956px;width:1691px;height:2px;background:#959694;"></div>
<div class="a" style="left:151px;top:936px;width:2px;height:22px;background:#8e8f8d;"></div>
<svg class="a" style="left:14px;top:943px" width="9" height="13"><path d="M1 1 L8 6.5 L1 12Z" fill="none" stroke="#7a7a7a" stroke-width="1.2"/></svg>
<svg class="a" style="left:36px;top:942px" width="16" height="15"><path d="M5 12 L5 3 L14 1 L14 10" fill="none" stroke="#777" stroke-width="1.3"/><ellipse cx="3.5" cy="12" rx="2.5" ry="2" fill="#777"/><ellipse cx="12.5" cy="10.5" rx="2.5" ry="2" fill="#777"/></svg>
<div class="tname" style="left:63px;top:941px">Music</div>
<div class="a" style="left:1092px;top:643px;width:751px;height:56px;background:#3a6898;"></div>
<div class="a" style="left:1372px;top:643px;width:77px;height:17px;background:#5a9aa2;"></div>
<div class="a" style="left:1449px;top:643px;width:1px;height:17px;background:#2a4a70;"></div>
<div class="clab" style="left:1095px;top:645px">Windows 11List Bad2.png</div>
<div class="clab" style="left:1453px;top:645px">S11 Good List 1.png</div>
<svg class="a" style="left:1092px;top:660px" width="69" height="39" viewBox="0 0 69 39"><rect width="69" height="39" fill="#050505"/><rect x="47" y="6" width="2" height="1.5" fill="#ddd"/><rect x="51" y="6" width="4" height="1" fill="#888"/><rect x="47" y="11" width="2" height="1.5" fill="#c33"/><rect x="51" y="11" width="7" height="1" fill="#888"/><rect x="47" y="16" width="2" height="1.5" fill="#ddd"/><rect x="51" y="16" width="10" height="1" fill="#888"/><rect x="47" y="21" width="2" height="1.5" fill="#c33"/><rect x="51" y="21" width="4" height="1" fill="#888"/><rect x="47" y="26" width="2" height="1.5" fill="#ddd"/><rect x="51" y="26" width="7" height="1" fill="#888"/><rect x="47" y="31" width="2" height="1.5" fill="#3c3"/><rect x="51" y="31" width="10" height="1" fill="#888"/></svg>
<svg class="a" style="left:1341px;top:660px" width="69" height="39" viewBox="0 0 69 39"><rect width="69" height="39" fill="#050505"/><rect x="47" y="6" width="2" height="1.5" fill="#ddd"/><rect x="51" y="6" width="4" height="1" fill="#888"/><rect x="47" y="11" width="2" height="1.5" fill="#c33"/><rect x="51" y="11" width="7" height="1" fill="#888"/><rect x="47" y="16" width="2" height="1.5" fill="#ddd"/><rect x="51" y="16" width="10" height="1" fill="#888"/><rect x="47" y="21" width="2" height="1.5" fill="#c33"/><rect x="51" y="21" width="4" height="1" fill="#888"/><rect x="47" y="26" width="2" height="1.5" fill="#ddd"/><rect x="51" y="26" width="7" height="1" fill="#888"/><rect x="47" y="31" width="2" height="1.5" fill="#3c3"/><rect x="51" y="31" width="10" height="1" fill="#888"/></svg>
<svg class="a" style="left:1412px;top:660px" width="69" height="39" viewBox="0 0 69 39"><rect width="69" height="39" fill="#050505"/><rect x="47" y="6" width="2" height="1.5" fill="#ddd"/><rect x="51" y="6" width="4" height="1" fill="#888"/><rect x="47" y="11" width="2" height="1.5" fill="#c33"/><rect x="51" y="11" width="7" height="1" fill="#888"/><rect x="47" y="16" width="2" height="1.5" fill="#ddd"/><rect x="51" y="16" width="10" height="1" fill="#888"/><rect x="47" y="21" width="2" height="1.5" fill="#c33"/><rect x="51" y="21" width="4" height="1" fill="#888"/><rect x="47" y="26" width="2" height="1.5" fill="#ddd"/><rect x="51" y="26" width="7" height="1" fill="#888"/><rect x="47" y="31" width="2" height="1.5" fill="#3c3"/><rect x="51" y="31" width="10" height="1" fill="#888"/></svg>
<div class="a" style="left:1410px;top:660px;width:2px;height:39px;background:#3a6898;"></div>
<div class="a" style="left:1092px;top:722px;width:751px;height:56px;background:#3a6898;"></div>
<div class="clab" style="left:1095px;top:724px">Bar Dark.png</div>
<div class="a" style="left:1092px;top:740px;width:69px;height:38px;background:#050505;"></div>
<div class="a" style="left:1141px;top:740px;width:18px;height:38px;background:#4a4a48;"></div>
<div class="a" style="left:152px;top:802px;width:1691px;height:56px;background:#3a6898;"></div>
<div class="a" style="left:247px;top:802px;width:78px;height:16px;background:#5a9aa2;"></div>
<div class="a" style="left:246px;top:802px;width:1px;height:56px;background:#2b4f78;"></div>
<div class="a" style="left:510px;top:802px;width:1px;height:56px;background:#2b4f78;"></div>
<div class="a" style="left:812px;top:802px;width:1px;height:56px;background:#2b4f78;"></div>
<div class="a" style="left:1139px;top:802px;width:1px;height:56px;background:#2b4f78;"></div>
<div class="a" style="left:1411px;top:802px;width:1px;height:56px;background:#2b4f78;"></div>
<div class="clab" style="left:328px;top:804px">S11 Promos.avi</div>
<div class="clab" style="left:513px;top:804px">S11 Promos.avi</div>
<div class="clab" style="left:816px;top:804px">Cam16.avi</div>
<div class="clab" style="left:1143px;top:804px">S11 Promos.avi</div>
<div class="clab" style="left:1415px;top:804px">S11 Promos.avi</div>
<div class="a" style="left:176px;top:818px;width:70px;height:40px;background:linear-gradient(90deg,#e2ddd6,#cfc6bc 55%,#a69c91)"></div>
<div class="a" style="left:203px;top:824px;width:15px;height:16px;background:#2a6ab8"></div>
<svg class="a" style="left:203px;top:824px" width="15" height="16"><path d="M5 15 L5 6 L3 6 L6 2 L9 6 L7 6 L7 15Z" fill="#fff"/><path d="M10 15 L10 7 L8.5 7 L11 4 L13.5 7 L12 7 L12 15Z" fill="#9fd0f8"/></svg>
<div class="a" style="left:195px;top:848px;width:34px;height:0;border-top:1px dashed #f4f4f4"></div>
<div class="a" style="left:206px;top:843px;width:8px;height:1px;background:#fff"></div>
<svg class="a" style="left:247px;top:818px" width="69" height="40" viewBox="0 0 69 40"><defs><linearGradient id="tg247" x1="0" x2="1"><stop offset="0" stop-color="#fafafa"/><stop offset="0.45" stop-color="#e4e4e4"/><stop offset="0.8" stop-color="#b4b4b4"/><stop offset="1" stop-color="#f0f0f0"/></linearGradient></defs><rect width="69" height="40" fill="url(#tg247)"/><rect x="11" y="3" width="47" height="28" fill="#111"/><rect x="13" y="5" width="43" height="24" fill="#c8dcee"/><g clip-path="inset(0)"><ellipse cx="28.2" cy="20.2" rx="10.3" ry="8.2" fill="#1e5af0" transform="rotate(-30 32.4 18.1)"/><ellipse cx="35.8" cy="17.0" rx="7.6" ry="7.3" fill="#2a6cff" transform="rotate(20 32.4 18.1)"/><ellipse cx="30.6" cy="19.2" rx="4.1" ry="5.4" fill="#5aa0ff" opacity="0.7" transform="rotate(-10 32.4 18.1)"/><ellipse cx="39.2" cy="23.5" rx="6.2" ry="3.9" fill="#1440c0"/></g><rect x="32.4" y="9.8" width="12.9" height="18.0" fill="#eef2f6"/><rect x="31.5" y="31" width="6" height="6" fill="#c8c8c8"/><rect x="23.5" y="37" width="22" height="2" fill="#555"/></svg>
<svg class="a" style="left:441px;top:818px" width="68" height="40" viewBox="0 0 68 40"><rect width="68" height="40" fill="#efefef"/><path d="M3 2 L65 4 L64 37 L3 36Z" fill="#0a0a0a"/><rect x="6" y="5" width="56" height="29" fill="#081630"/><ellipse cx="26.5" cy="23.9" rx="11.8" ry="9.4" fill="#1e5af0" transform="rotate(-30 31.2 21.5)"/><ellipse cx="35.1" cy="20.2" rx="8.6" ry="8.4" fill="#2a6cff" transform="rotate(20 31.2 21.5)"/><ellipse cx="29.2" cy="22.7" rx="4.7" ry="6.2" fill="#5aa0ff" opacity="0.7" transform="rotate(-10 31.2 21.5)"/><ellipse cx="39.0" cy="27.6" rx="7.1" ry="4.4" fill="#1440c0"/><rect x="31.2" y="13.7" width="16.8" height="18.9" fill="#1e2432" opacity="0.9"/></svg>
<svg class="a" style="left:511px;top:818px" width="69" height="40" viewBox="0 0 69 40"><defs><linearGradient id="tg511" x1="0" x2="1"><stop offset="0" stop-color="#fafafa"/><stop offset="0.45" stop-color="#e4e4e4"/><stop offset="0.8" stop-color="#b4b4b4"/><stop offset="1" stop-color="#f0f0f0"/></linearGradient></defs><rect width="69" height="40" fill="url(#tg511)"/><rect x="16" y="4" width="37" height="24" fill="#111"/><rect x="18" y="6" width="33" height="20" fill="#081838"/><g clip-path="inset(0)"><ellipse cx="29.7" cy="18.7" rx="7.9" ry="6.8" fill="#1e5af0" transform="rotate(-30 32.9 16.9)"/><ellipse cx="35.5" cy="16.0" rx="5.8" ry="6.1" fill="#2a6cff" transform="rotate(20 32.9 16.9)"/><ellipse cx="31.5" cy="17.8" rx="3.2" ry="4.5" fill="#5aa0ff" opacity="0.7" transform="rotate(-10 32.9 16.9)"/><ellipse cx="38.1" cy="21.4" rx="4.8" ry="3.2" fill="#1440c0"/></g><rect x="34.5" y="12.0" width="7.3" height="13.0" fill="#1a2030"/><rect x="31.5" y="28" width="6" height="9" fill="#c8c8c8"/><rect x="23.5" y="37" width="22" height="2" fill="#555"/></svg>
<svg class="a" style="left:743px;top:818px" width="68" height="40" viewBox="0 0 68 40"><defs><linearGradient id="tg743" x1="0" x2="1"><stop offset="0" stop-color="#fafafa"/><stop offset="0.45" stop-color="#e4e4e4"/><stop offset="0.8" stop-color="#b4b4b4"/><stop offset="1" stop-color="#f0f0f0"/></linearGradient></defs><rect width="68" height="40" fill="url(#tg743)"/><rect x="16" y="4" width="36" height="24" fill="#111"/><rect x="18" y="6" width="32" height="20" fill="#081838"/><g clip-path="inset(0)"><ellipse cx="29.3" cy="18.7" rx="7.7" ry="6.8" fill="#1e5af0" transform="rotate(-30 32.4 16.9)"/><ellipse cx="35.0" cy="16.0" rx="5.6" ry="6.1" fill="#2a6cff" transform="rotate(20 32.4 16.9)"/><ellipse cx="31.1" cy="17.8" rx="3.1" ry="4.5" fill="#5aa0ff" opacity="0.7" transform="rotate(-10 32.4 16.9)"/><ellipse cx="37.5" cy="21.4" rx="4.6" ry="3.2" fill="#1440c0"/></g><rect x="34.0" y="12.0" width="7.0" height="13.0" fill="#1a2030"/><rect x="31.0" y="28" width="6" height="9" fill="#c8c8c8"/><rect x="23.0" y="37" width="22" height="2" fill="#555"/></svg>
<svg class="a" style="left:814px;top:818px" width="69" height="40" viewBox="0 0 69 40"><defs><linearGradient id="tg814" x1="0" x2="1"><stop offset="0" stop-color="#fafafa"/><stop offset="0.45" stop-color="#e4e4e4"/><stop offset="0.8" stop-color="#b4b4b4"/><stop offset="1" stop-color="#f0f0f0"/></linearGradient></defs><rect width="69" height="40" fill="url(#tg814)"/><rect x="11" y="3" width="47" height="28" fill="#111"/><rect x="13" y="5" width="43" height="24" fill="#c8dcee"/><g clip-path="inset(0)"><ellipse cx="28.2" cy="20.2" rx="10.3" ry="8.2" fill="#1e5af0" transform="rotate(-30 32.4 18.1)"/><ellipse cx="35.8" cy="17.0" rx="7.6" ry="7.3" fill="#2a6cff" transform="rotate(20 32.4 18.1)"/><ellipse cx="30.6" cy="19.2" rx="4.1" ry="5.4" fill="#5aa0ff" opacity="0.7" transform="rotate(-10 32.4 18.1)"/><ellipse cx="39.2" cy="23.5" rx="6.2" ry="3.9" fill="#1440c0"/></g><rect x="32.4" y="9.8" width="12.9" height="18.0" fill="#eef2f6"/><rect x="31.5" y="31" width="6" height="6" fill="#c8c8c8"/><rect x="23.5" y="37" width="22" height="2" fill="#555"/></svg>
<svg class="a" style="left:1070px;top:818px" width="66" height="40" viewBox="0 0 66 40"><defs><linearGradient id="tg1070" x1="0" x2="1"><stop offset="0" stop-color="#fafafa"/><stop offset="0.45" stop-color="#e4e4e4"/><stop offset="0.8" stop-color="#b4b4b4"/><stop offset="1" stop-color="#f0f0f0"/></linearGradient></defs><rect width="66" height="40" fill="url(#tg1070)"/><rect x="11" y="3" width="44" height="28" fill="#111"/><rect x="13" y="5" width="40" height="24" fill="#c8dcee"/><g clip-path="inset(0)"><ellipse cx="27.2" cy="20.2" rx="9.6" ry="8.2" fill="#1e5af0" transform="rotate(-30 31.0 18.1)"/><ellipse cx="34.2" cy="17.0" rx="7.0" ry="7.3" fill="#2a6cff" transform="rotate(20 31.0 18.1)"/><ellipse cx="29.4" cy="19.2" rx="3.8" ry="5.4" fill="#5aa0ff" opacity="0.7" transform="rotate(-10 31.0 18.1)"/><ellipse cx="37.4" cy="23.5" rx="5.8" ry="3.9" fill="#1440c0"/></g><rect x="31.0" y="9.8" width="12.0" height="18.0" fill="#eef2f6"/><rect x="30.0" y="31" width="6" height="6" fill="#c8c8c8"/><rect x="22.0" y="37" width="22" height="2" fill="#555"/></svg>
<svg class="a" style="left:1145px;top:818px" width="65" height="40" viewBox="0 0 65 40"><rect width="65" height="40" fill="#efefef"/><path d="M3 2 L62 4 L61 37 L3 36Z" fill="#0a0a0a"/><rect x="6" y="5" width="53" height="29" fill="#081630"/><ellipse cx="25.4" cy="23.9" rx="11.1" ry="9.4" fill="#1e5af0" transform="rotate(-30 29.8 21.5)"/><ellipse cx="33.6" cy="20.2" rx="8.2" ry="8.4" fill="#2a6cff" transform="rotate(20 29.8 21.5)"/><ellipse cx="28.0" cy="22.7" rx="4.5" ry="6.2" fill="#5aa0ff" opacity="0.7" transform="rotate(-10 29.8 21.5)"/><ellipse cx="37.3" cy="27.6" rx="6.7" ry="4.4" fill="#1440c0"/><rect x="29.9" y="13.7" width="15.9" height="18.9" fill="#1e2432" opacity="0.9"/></svg>
<svg class="a" style="left:1341px;top:818px" width="68" height="40" viewBox="0 0 68 40"><rect width="68" height="40" fill="#efefef"/><path d="M3 2 L65 4 L64 37 L3 36Z" fill="#0a0a0a"/><rect x="6" y="5" width="56" height="29" fill="#081630"/><ellipse cx="26.5" cy="23.9" rx="11.8" ry="9.4" fill="#1e5af0" transform="rotate(-30 31.2 21.5)"/><ellipse cx="35.1" cy="20.2" rx="8.6" ry="8.4" fill="#2a6cff" transform="rotate(20 31.2 21.5)"/><ellipse cx="29.2" cy="22.7" rx="4.7" ry="6.2" fill="#5aa0ff" opacity="0.7" transform="rotate(-10 31.2 21.5)"/><ellipse cx="39.0" cy="27.6" rx="7.1" ry="4.4" fill="#1440c0"/><rect x="31.2" y="13.7" width="16.8" height="18.9" fill="#1e2432" opacity="0.9"/></svg>
<svg class="a" style="left:1413px;top:818px" width="68" height="40" viewBox="0 0 68 40"><defs><linearGradient id="tg1413" x1="0" x2="1"><stop offset="0" stop-color="#fafafa"/><stop offset="0.45" stop-color="#e4e4e4"/><stop offset="0.8" stop-color="#b4b4b4"/><stop offset="1" stop-color="#f0f0f0"/></linearGradient></defs><rect width="68" height="40" fill="url(#tg1413)"/><rect x="16" y="4" width="36" height="24" fill="#111"/><rect x="18" y="6" width="32" height="20" fill="#c8dcee"/><g clip-path="inset(0)"><ellipse cx="29.3" cy="18.7" rx="7.7" ry="6.8" fill="#1e5af0" transform="rotate(-30 32.4 16.9)"/><ellipse cx="35.0" cy="16.0" rx="5.6" ry="6.1" fill="#2a6cff" transform="rotate(20 32.4 16.9)"/><ellipse cx="31.1" cy="17.8" rx="3.1" ry="4.5" fill="#5aa0ff" opacity="0.7" transform="rotate(-10 32.4 16.9)"/><ellipse cx="37.5" cy="21.4" rx="4.6" ry="3.2" fill="#1440c0"/></g><rect x="32.4" y="10.0" width="9.6" height="15.0" fill="#eef2f6"/><rect x="31.0" y="28" width="6" height="9" fill="#c8c8c8"/><rect x="23.0" y="37" width="22" height="2" fill="#555"/></svg>
<div class="a" style="left:1161px;top:665px;width:682px;height:1px;background:#e8d840;"></div>
<div class="a" style="left:152px;top:824px;width:1691px;height:1px;background:#e8d840;"></div>
<div class="a" style="left:1161px;top:751px;width:682px;height:1px;background:#e8d840;"></div>
<svg class="a" style="left:0;top:0" width="1920" height="1080"><path d="M1092 692 L1104 690 L1161 666" stroke="#e8d840" stroke-width="1.3" fill="none"/><path d="M1092 771 L1099 769 L1161 751" stroke="#e8d840" stroke-width="1.3" fill="none"/><path d="M1104 685 L1108 690 L1104 695 L1100 690Z" fill="#f5c060" stroke="#fff5c8" stroke-width="0.8"/><path d="M1161 661 L1165 666 L1161 671 L1157 666Z" fill="#f5c060" stroke="#fff5c8" stroke-width="0.8"/><path d="M1099 764 L1103 769 L1099 774 L1095 769Z" fill="#f5c060" stroke="#fff5c8" stroke-width="0.8"/><path d="M1161 746 L1165 751 L1161 756 L1157 751Z" fill="#f5c060" stroke="#fff5c8" stroke-width="0.8"/><path d="M1449 746 L1453 751 L1449 756 L1445 751Z" fill="#f5c060" stroke="#fff5c8" stroke-width="0.8"/></svg>
<div class="a" style="left:152px;top:858px;width:1691px;height:55px;background:#4c8a69;"></div>
<svg class="a" style="left:0;top:0" width="1920" height="1080"><path d="M152 892L152 882.9L153.5 876.4L155.0 883.1L156.5 881.7L158.0 880.9L159.5 883.0L161.0 883.8L162.5 882.9L164.0 880.8L165.5 882.9L167.0 883.5L168.5 883.2L170.0 883.6L171.5 882.0L173.0 882.8L174.5 883.1L176.0 882.3L177.5 881.6L179.0 879.8L180.5 876.1L182.0 877.8L183.5 884.5L185.0 883.7L186.5 881.1L188.0 881.4L189.5 884.6L191.0 879.1L192.5 883.2L194.0 883.0L195.5 881.1L197.0 883.0L198.5 885.2L200.0 881.5L201.5 876.7L203.0 884.6L204.5 885.0L206.0 883.6L207.5 884.4L209.0 881.7L210.5 885.3L212.0 881.5L213.5 882.2L215.0 884.6L216.5 881.2L218.0 883.2L219.5 884.4L221.0 882.3L222.5 881.3L224.0 882.9L225.5 880.7L227.0 881.3L228.5 881.2L230.0 880.4L231.5 880.2L233.0 884.5L234.5 882.2L236.0 883.3L237.5 881.5L239.0 880.8L240.5 883.9L242.0 883.8L243.5 883.7L245.0 881.8L246.5 885.4L248.0 882.3L249.5 882.6L251.0 881.5L252.5 884.3L254.0 882.2L255.5 882.9L257.0 882.9L258.5 880.9L260.0 880.5L261.5 883.6L263.0 882.8L264.5 882.6L266.0 880.5L267.5 882.7L269.0 883.8L270.5 884.2L272.0 878.9L273.5 882.9L275.0 880.2L276.5 882.4L278.0 881.9L279.5 881.8L281.0 885.3L282.5 881.7L284.0 882.1L285.5 884.1L287.0 885.0L288.5 880.8L290.0 884.3L291.5 884.8L293.0 885.4L294.5 883.6L296.0 882.8L297.5 882.8L299.0 882.0L300.5 880.5L302.0 882.5L303.5 882.1L305.0 884.5L306.5 883.7L308.0 881.9L309.5 878.3L311.0 882.7L312.5 884.4L314.0 885.4L315.5 883.1L317.0 881.1L318.5 882.5L320.0 881.2L321.5 880.6L323.0 880.5L324.5 880.0L326.0 884.2L327.5 882.2L329.0 882.4L330.5 881.2L332.0 883.5L333.5 884.0L335.0 880.4L336.5 881.6L338.0 883.6L339.5 882.0L341.0 883.5L342.5 882.8L344.0 883.6L345.5 873.6L347.0 877.8L348.5 878.8L350.0 881.6L351.5 880.7L353.0 879.9L354.5 883.0L356.0 884.1L357.5 882.5L359.0 881.4L360.5 883.0L362.0 883.3L363.5 882.2L365.0 884.4L366.5 881.7L368.0 881.5L369.5 884.3L371.0 881.1L372.5 881.9L374.0 880.1L375.5 881.3L377.0 882.9L378.5 882.7L380.0 883.1L381.5 883.8L383.0 880.4L384.5 882.1L386.0 884.4L387.5 883.0L389.0 884.5L390.5 880.7L392.0 882.7L393.5 885.2L395.0 880.8L396.5 884.8L398.0 881.2L399.5 875.1L401.0 881.4L402.5 884.5L404.0 885.2L405.5 884.6L407.0 883.7L408.5 882.4L410.0 880.1L411.5 880.3L413.0 878.8L414.5 881.3L416.0 879.1L417.5 879.4L419.0 878.4L420.5 880.8L422.0 877.2L423.5 878.0L425.0 881.6L426.5 878.5L428.0 879.7L429.5 881.4L431.0 883.9L432.5 882.1L434.0 879.7L435.5 882.5L437.0 883.8L438.5 882.3L440.0 885.2L441.5 881.2L443.0 880.9L444.5 876.1L446.0 880.2L447.5 881.6L449.0 882.8L450.5 881.8L452.0 878.5L453.5 880.7L455.0 880.0L456.5 882.2L458.0 879.3L459.5 882.5L461.0 883.6L462.5 881.1L464.0 882.3L465.5 882.0L467.0 880.3L468.5 880.2L470.0 880.6L471.5 880.0L473.0 883.5L474.5 880.9L476.0 880.4L477.5 880.4L479.0 880.2L480.5 880.0L482.0 882.6L483.5 883.6L485.0 885.1L486.5 884.7L488.0 884.2L489.5 883.2L491.0 880.4L492.5 875.4L494.0 880.7L495.5 877.7L497.0 880.0L498.5 882.0L500.0 880.3L501.5 879.2L503.0 877.8L504.5 878.9L506.0 879.9L507.5 877.4L509.0 880.0L510.5 881.8L512.0 881.9L513.5 882.7L515.0 881.5L516.5 880.3L518.0 881.9L519.5 880.5L521.0 883.3L522.5 883.1L524.0 884.2L525.5 884.3L527.0 882.6L528.5 879.2L530.0 878.6L531.5 877.9L533.0 880.2L534.5 879.9L536.0 880.3L537.5 882.0L539.0 878.6L540.5 881.3L542.0 880.0L543.5 879.5L545.0 881.5L546.5 879.9L548.0 882.0L549.5 877.9L551.0 878.6L552.5 880.3L554.0 882.2L555.5 883.2L557.0 883.1L558.5 883.2L560.0 884.9L561.5 881.3L563.0 882.9L564.5 883.3L566.0 876.2L567.5 877.7L569.0 883.3L570.5 883.1L572.0 883.9L573.5 881.9L575.0 882.1L576.5 883.0L578.0 885.3L579.5 881.5L581.0 883.0L582.5 882.9L584.0 884.3L585.5 879.8L587.0 881.1L588.5 879.3L590.0 878.8L591.5 879.4L593.0 880.7L594.5 884.2L596.0 881.0L597.5 881.6L599.0 883.1L600.5 880.9L602.0 879.5L603.5 884.3L605.0 880.7L606.5 884.8L608.0 879.5L609.5 882.6L611.0 882.1L612.5 883.8L614.0 882.7L615.5 884.0L617.0 884.7L618.5 883.5L620.0 883.5L621.5 881.7L623.0 882.9L624.5 882.3L626.0 883.7L627.5 883.6L629.0 883.8L630.5 881.7L632.0 882.1L633.5 884.2L635.0 882.0L636.5 881.9L638.0 882.1L639.5 879.1L641.0 881.9L642.5 882.9L644.0 881.0L645.5 880.3L647.0 881.8L648.5 884.6L650.0 882.1L651.5 882.8L653.0 882.2L654.5 883.3L656.0 880.6L657.5 881.1L659.0 882.5L660.5 882.8L662.0 881.8L663.5 881.7L665.0 874.8L666.5 882.3L668.0 883.2L669.5 882.9L671.0 881.7L672.5 882.4L674.0 885.3L675.5 883.8L677.0 884.4L678.5 882.1L680.0 883.7L681.5 881.0L683.0 880.5L684.5 880.2L686.0 882.8L687.5 881.2L689.0 875.1L690.5 882.1L692.0 880.8L693.5 871.5L695.0 877.7L696.5 872.7L698.0 879.5L699.5 878.2L701.0 877.3L702.5 877.4L704.0 877.1L705.5 877.5L707.0 879.4L708.5 880.3L710.0 878.6L711.5 878.7L713.0 878.2L714.5 880.2L716.0 879.5L717.5 878.5L719.0 881.1L720.5 878.3L722.0 878.6L723.5 879.7L725.0 879.3L726.5 877.0L728.0 880.1L729.5 871.2L731.0 873.8L732.5 881.2L734.0 878.4L735.5 878.6L737.0 879.8L738.5 880.1L740.0 876.8L741.5 877.4L743.0 879.4L744.5 871.1L746.0 881.6L747.5 874.1L749.0 876.8L750.5 880.4L752.0 875.3L753.5 879.1L755.0 884.0L756.5 875.8L758.0 879.3L759.5 879.5L761.0 879.2L762.5 881.9L764.0 882.2L765.5 884.9L767.0 882.6L768.5 882.9L770.0 882.4L771.5 884.1L773.0 881.4L774.5 879.9L776.0 879.9L777.5 879.6L779.0 883.6L780.5 873.0L782.0 879.3L783.5 878.5L785.0 881.8L786.5 880.1L788.0 880.1L789.5 880.5L791.0 881.5L792.5 880.9L794.0 882.2L795.5 882.7L797.0 883.4L798.5 882.5L800.0 882.5L801.5 875.1L803.0 880.0L804.5 879.4L806.0 876.6L807.5 880.7L809.0 877.7L810.5 880.2L812.0 877.8L813.5 877.4L815.0 880.7L816.5 882.1L818.0 877.4L819.5 877.7L821.0 881.3L822.5 880.1L824.0 881.2L825.5 881.9L827.0 882.0L828.5 879.7L830.0 878.7L831.5 879.8L833.0 882.3L834.5 882.7L836.0 880.4L837.5 881.7L839.0 881.0L840.5 879.2L842.0 880.6L843.5 883.1L845.0 880.7L846.5 884.3L848.0 883.6L849.5 882.5L851.0 880.8L852.5 880.8L854.0 879.5L855.5 883.5L857.0 883.7L858.5 881.3L860.0 881.3L861.5 880.7L863.0 882.0L864.5 879.8L866.0 880.7L867.5 880.7L869.0 881.1L870.5 881.6L872.0 882.0L873.5 883.3L875.0 883.2L876.5 878.1L878.0 877.4L879.5 881.9L881.0 876.4L882.5 880.9L884.0 882.6L885.5 881.9L887.0 879.5L888.5 880.1L890.0 880.0L891.5 877.7L893.0 871.7L894.5 876.8L896.0 879.0L897.5 875.0L899.0 877.4L900.5 877.0L902.0 879.4L903.5 876.8L905.0 878.8L906.5 878.5L908.0 878.4L909.5 879.9L911.0 879.5L912.5 880.2L914.0 879.5L915.5 880.1L917.0 881.9L918.5 876.1L920.0 881.1L921.5 878.8L923.0 883.5L924.5 883.5L926.0 884.6L927.5 884.2L929.0 881.8L930.5 881.5L932.0 880.7L933.5 882.5L935.0 878.6L936.5 878.1L938.0 879.9L939.5 879.9L941.0 877.8L942.5 881.0L944.0 881.6L945.5 877.6L947.0 874.2L948.5 878.9L950.0 876.8L951.5 878.9L953.0 877.2L954.5 880.7L956.0 878.4L957.5 879.6L959.0 878.8L960.5 877.3L962.0 877.7L963.5 878.8L965.0 878.5L966.5 878.1L968.0 880.3L969.5 873.8L971.0 878.2L972.5 878.3L974.0 876.5L975.5 881.0L977.0 882.2L978.5 879.3L980.0 880.4L981.5 881.6L983.0 881.0L984.5 880.2L986.0 881.5L987.5 879.2L989.0 880.5L990.5 877.9L992.0 880.2L993.5 877.9L995.0 880.8L996.5 880.9L998.0 881.4L999.5 881.1L1001.0 882.7L1002.5 881.1L1004.0 882.4L1005.5 881.4L1007.0 878.5L1008.5 881.4L1010.0 880.7L1011.5 881.1L1013.0 880.5L1014.5 878.6L1016.0 880.2L1017.5 879.1L1019.0 881.4L1020.5 884.0L1022.0 882.5L1023.5 881.0L1025.0 877.7L1026.5 883.3L1028.0 883.2L1029.5 883.0L1031.0 877.0L1032.5 883.3L1034.0 884.2L1035.5 882.2L1037.0 881.9L1038.5 880.5L1040.0 875.9L1041.5 880.6L1043.0 882.6L1044.5 878.9L1046.0 879.2L1047.5 877.2L1049.0 879.0L1050.5 880.0L1052.0 877.3L1053.5 877.9L1055.0 880.4L1056.5 881.8L1058.0 882.2L1059.5 880.5L1061.0 880.7L1062.5 879.8L1064.0 880.7L1065.5 882.5L1067.0 883.9L1068.5 884.7L1070.0 884.8L1071.5 881.0L1073.0 880.3L1074.5 882.0L1076.0 878.9L1077.5 880.1L1079.0 879.4L1080.5 880.9L1082.0 881.3L1083.5 884.2L1085.0 883.1L1086.5 885.3L1088.0 881.7L1089.5 882.6L1091.0 884.0L1092.5 880.6L1094.0 883.9L1095.5 880.2L1097.0 881.6L1098.5 883.0L1100.0 882.9L1101.5 882.0L1103.0 882.1L1104.5 878.9L1106.0 881.6L1107.5 880.2L1109.0 880.8L1110.5 882.7L1112.0 882.1L1113.5 882.8L1115.0 884.8L1116.5 882.1L1118.0 884.4L1119.5 883.2L1121.0 884.9L1122.5 882.0L1124.0 884.2L1125.5 882.2L1127.0 881.9L1128.5 883.1L1130.0 882.4L1131.5 882.4L1133.0 880.8L1134.5 881.0L1136.0 880.2L1137.5 879.0L1139.0 882.0L1140.5 879.9L1142.0 882.7L1143.5 885.4L1145.0 883.3L1146.5 884.9L1148.0 881.7L1149.5 884.8L1151.0 884.4L1152.5 882.4L1154.0 881.4L1155.5 882.9L1157.0 883.8L1158.5 881.7L1160.0 883.2L1161.5 877.8L1163.0 883.9L1164.5 883.2L1166.0 883.9L1167.5 879.8L1169.0 882.2L1170.5 879.3L1172.0 879.2L1173.5 879.5L1175.0 877.7L1176.5 881.5L1178.0 880.4L1179.5 882.5L1181.0 883.1L1182.5 881.6L1184.0 883.5L1185.5 881.6L1187.0 883.6L1188.5 885.4L1190.0 884.0L1191.5 881.1L1193.0 880.0L1194.5 879.4L1196.0 881.7L1197.5 881.8L1199.0 880.5L1200.5 875.7L1202.0 882.0L1203.5 884.0L1205.0 882.4L1206.5 882.8L1208.0 882.0L1209.5 879.9L1211.0 880.6L1212.5 878.2L1214.0 876.6L1215.5 876.7L1217.0 878.0L1218.5 879.6L1220.0 881.4L1221.5 881.0L1223.0 882.1L1224.5 883.7L1226.0 880.4L1227.5 879.6L1229.0 879.7L1230.5 873.7L1232.0 879.5L1233.5 883.0L1235.0 884.0L1236.5 881.5L1238.0 882.0L1239.5 881.5L1241.0 881.2L1242.5 882.7L1244.0 881.8L1245.5 883.5L1247.0 884.8L1248.5 881.9L1250.0 884.8L1251.5 881.8L1253.0 883.9L1254.5 883.3L1256.0 875.3L1257.5 880.7L1259.0 883.6L1260.5 882.5L1262.0 883.5L1263.5 881.6L1265.0 884.8L1266.5 883.5L1268.0 885.5L1269.5 883.2L1271.0 881.4L1272.5 880.6L1274.0 884.2L1275.5 880.7L1277.0 883.8L1278.5 880.6L1280.0 881.9L1281.5 873.1L1283.0 880.6L1284.5 881.0L1286.0 881.3L1287.5 881.0L1289.0 880.7L1290.5 880.3L1292.0 883.5L1293.5 881.9L1295.0 881.7L1296.5 880.4L1298.0 881.0L1299.5 884.4L1301.0 882.4L1302.5 880.8L1304.0 881.7L1305.5 882.8L1307.0 883.3L1308.5 879.3L1310.0 883.7L1311.5 883.5L1313.0 883.0L1314.5 884.9L1316.0 883.3L1317.5 882.1L1319.0 881.5L1320.5 880.0L1322.0 880.4L1323.5 871.7L1325.0 879.0L1326.5 877.3L1328.0 877.5L1329.5 881.0L1331.0 877.4L1332.5 878.5L1334.0 872.3L1335.5 872.1L1337.0 878.4L1338.5 879.9L1340.0 878.0L1341.5 881.5L1343.0 876.3L1344.5 878.2L1346.0 882.1L1347.5 880.5L1349.0 880.7L1350.5 881.6L1352.0 881.4L1353.5 880.4L1355.0 879.7L1356.5 883.0L1358.0 883.4L1359.5 880.1L1361.0 879.2L1362.5 880.3L1364.0 881.7L1365.5 879.7L1367.0 874.7L1368.5 879.8L1370.0 881.6L1371.5 880.3L1373.0 876.8L1374.5 878.5L1376.0 880.5L1377.5 881.3L1379.0 876.5L1380.5 879.8L1382.0 880.1L1383.5 878.3L1385.0 877.6L1386.5 880.4L1388.0 877.2L1389.5 879.7L1391.0 879.3L1392.5 881.9L1394.0 874.6L1395.5 880.6L1397.0 882.1L1398.5 880.8L1400.0 881.6L1401.5 881.9L1403.0 881.6L1404.5 882.0L1406.0 883.9L1407.5 873.1L1409.0 881.2L1410.5 882.2L1412.0 883.9L1413.5 884.0L1415.0 880.9L1416.5 882.4L1418.0 881.7L1419.5 881.7L1421.0 880.6L1422.5 880.0L1424.0 882.9L1425.5 880.0L1427.0 882.0L1428.5 880.7L1430.0 879.1L1431.5 882.0L1433.0 881.4L1434.5 877.7L1436.0 878.8L1437.5 879.3L1439.0 880.0L1440.5 877.9L1442.0 880.4L1443.5 878.0L1445.0 877.8L1446.5 880.4L1448.0 878.9L1449.5 877.2L1451.0 880.1L1452.5 881.5L1454.0 880.8L1455.5 879.6L1457.0 872.6L1458.5 882.3L1460.0 880.7L1461.5 882.6L1463.0 882.4L1464.5 883.0L1466.0 879.9L1467.5 882.1L1469.0 881.0L1470.5 883.0L1472.0 882.9L1473.5 882.7L1475.0 874.4L1476.5 882.7L1478.0 880.9L1479.5 883.8L1481.0 883.0L1482.5 882.5L1484.0 883.5L1485.5 880.7L1487.0 879.8L1488.5 883.7L1490.0 882.0L1491.5 881.6L1493.0 882.6L1494.5 877.6L1496.0 879.7L1497.5 880.6L1499.0 879.4L1500.5 877.3L1502.0 880.6L1503.5 878.3L1505.0 877.8L1506.5 880.0L1508.0 878.2L1509.5 880.2L1511.0 877.8L1512.5 880.4L1514.0 878.5L1515.5 877.5L1517.0 879.1L1518.5 878.4L1520.0 880.2L1521.5 878.2L1523.0 879.6L1524.5 877.7L1526.0 878.5L1527.5 877.2L1529.0 878.8L1530.5 882.0L1532.0 882.1L1533.5 878.5L1535.0 881.5L1536.5 880.8L1538.0 882.9L1539.5 882.2L1541.0 883.8L1542.5 882.3L1544.0 875.5L1545.5 883.5L1547.0 882.2L1548.5 882.7L1550.0 880.4L1551.5 881.8L1553.0 879.5L1554.5 882.0L1556.0 880.7L1557.5 881.8L1559.0 881.6L1560.5 879.4L1562.0 876.2L1563.5 881.2L1565.0 882.2L1566.5 884.8L1568.0 882.8L1569.5 882.4L1571.0 881.1L1572.5 884.9L1574.0 876.9L1575.5 881.1L1577.0 882.6L1578.5 885.2L1580.0 885.5L1581.5 885.3L1583.0 884.2L1584.5 882.9L1586.0 882.8L1587.5 884.6L1589.0 882.2L1590.5 884.1L1592.0 880.9L1593.5 881.3L1595.0 882.7L1596.5 882.2L1598.0 876.9L1599.5 875.5L1601.0 879.0L1602.5 878.8L1604.0 882.4L1605.5 878.2L1607.0 880.0L1608.5 869.9L1610.0 877.4L1611.5 877.3L1613.0 879.3L1614.5 880.4L1616.0 880.1L1617.5 880.4L1619.0 880.9L1620.5 880.1L1622.0 879.9L1623.5 880.5L1625.0 878.1L1626.5 878.3L1628.0 877.3L1629.5 880.4L1631.0 877.2L1632.5 878.1L1634.0 880.0L1635.5 877.9L1637.0 876.5L1638.5 875.4L1640.0 876.8L1641.5 876.9L1643.0 878.4L1644.5 879.9L1646.0 879.4L1647.5 878.6L1649.0 882.7L1650.5 883.9L1652.0 883.7L1653.5 881.7L1655.0 882.7L1656.5 881.5L1658.0 881.0L1659.5 885.1L1661.0 883.5L1662.5 882.4L1664.0 883.9L1665.5 884.4L1667.0 883.7L1668.5 879.5L1670.0 883.5L1671.5 881.4L1673.0 884.4L1674.5 882.1L1676.0 882.1L1677.5 882.6L1679.0 884.0L1680.5 882.3L1682.0 883.8L1683.5 883.6L1685.0 883.7L1686.5 884.6L1688.0 882.0L1689.5 884.2L1691.0 885.2L1692.5 882.0L1694.0 881.2L1695.5 881.9L1697.0 882.5L1698.5 883.4L1700.0 883.4L1701.5 882.0L1703.0 881.2L1704.5 875.3L1706.0 879.8L1707.5 879.1L1709.0 877.5L1710.5 879.8L1712.0 880.2L1713.5 880.1L1715.0 876.7L1716.5 878.2L1718.0 878.1L1719.5 880.7L1721.0 878.7L1722.5 879.4L1724.0 881.0L1725.5 881.5L1727.0 880.9L1728.5 881.1L1730.0 882.5L1731.5 884.8L1733.0 881.9L1734.5 883.1L1736.0 881.8L1737.5 884.3L1739.0 883.4L1740.5 883.0L1742.0 882.2L1743.5 882.4L1745.0 882.2L1746.5 882.3L1748.0 882.1L1749.5 875.9L1751.0 881.2L1752.5 879.5L1754.0 880.4L1755.5 879.6L1757.0 877.4L1758.5 876.6L1760.0 880.0L1761.5 878.2L1763.0 880.0L1764.5 879.9L1766.0 877.2L1767.5 876.6L1769.0 880.1L1770.5 877.0L1772.0 879.8L1773.5 883.2L1775.0 883.8L1776.5 883.2L1778.0 881.3L1779.5 880.7L1781.0 883.4L1782.5 880.6L1784.0 881.3L1785.5 875.4L1787.0 879.3L1788.5 877.3L1790.0 878.6L1791.5 881.9L1793.0 882.5L1794.5 882.0L1796.0 873.3L1797.5 882.5L1799.0 879.7L1800.5 881.8L1802.0 878.7L1803.5 879.9L1805.0 880.0L1806.5 881.8L1808.0 881.7L1809.5 881.0L1811.0 881.2L1812.5 880.7L1814.0 880.3L1815.5 880.8L1817.0 881.8L1818.5 882.8L1820.0 882.2L1821.5 882.3L1823.0 883.9L1824.5 884.3L1826.0 885.2L1827.5 883.8L1829.0 883.4L1830.5 882.8L1832.0 878.5L1833.5 880.7L1835.0 880.6L1836.5 879.0L1838.0 881.2L1839.5 880.7L1841.0 881.7L1842.5 872.2L1843 892 Z" fill="#2e5b41"/><path d="M152 913L152 897.6L153.5 896.9L155.0 899.1L156.5 897.7L158.0 897.1L159.5 895.5L161.0 898.5L162.5 899.0L164.0 898.1L165.5 898.9L167.0 889.5L168.5 897.7L170.0 896.0L171.5 899.9L173.0 898.6L174.5 898.7L176.0 895.7L177.5 897.6L179.0 896.6L180.5 896.5L182.0 896.5L183.5 899.0L185.0 892.0L186.5 898.9L188.0 898.4L189.5 899.6L191.0 897.4L192.5 897.1L194.0 898.4L195.5 898.6L197.0 897.5L198.5 897.3L200.0 896.2L201.5 896.3L203.0 896.1L204.5 896.3L206.0 899.1L207.5 895.2L209.0 896.7L210.5 898.9L212.0 898.2L213.5 897.0L215.0 899.3L216.5 900.5L218.0 900.0L219.5 899.2L221.0 901.7L222.5 902.6L224.0 901.5L225.5 899.6L227.0 902.7L228.5 903.2L230.0 902.1L231.5 901.4L233.0 902.7L234.5 900.6L236.0 902.2L237.5 898.8L239.0 898.4L240.5 898.3L242.0 902.6L243.5 902.2L245.0 899.9L246.5 899.7L248.0 900.1L249.5 901.4L251.0 901.7L252.5 896.8L254.0 900.3L255.5 902.4L257.0 898.5L258.5 899.8L260.0 899.3L261.5 898.6L263.0 902.8L264.5 899.9L266.0 900.9L267.5 899.6L269.0 902.6L270.5 902.2L272.0 894.7L273.5 902.7L275.0 900.8L276.5 901.5L278.0 899.6L279.5 892.4L281.0 892.2L282.5 898.9L284.0 898.0L285.5 900.2L287.0 897.1L288.5 896.7L290.0 897.8L291.5 899.1L293.0 896.5L294.5 895.9L296.0 899.2L297.5 899.7L299.0 898.5L300.5 898.7L302.0 899.1L303.5 895.5L305.0 896.5L306.5 896.0L308.0 898.9L309.5 897.3L311.0 898.0L312.5 899.0L314.0 899.6L315.5 896.6L317.0 899.9L318.5 899.4L320.0 898.2L321.5 898.6L323.0 896.4L324.5 897.7L326.0 896.8L327.5 896.3L329.0 897.9L330.5 901.1L332.0 900.9L333.5 901.4L335.0 896.7L336.5 898.0L338.0 900.1L339.5 898.3L341.0 897.1L342.5 897.2L344.0 896.6L345.5 901.7L347.0 901.3L348.5 897.5L350.0 895.4L351.5 898.2L353.0 896.1L354.5 900.4L356.0 898.7L357.5 901.1L359.0 901.5L360.5 900.0L362.0 900.7L363.5 899.4L365.0 899.0L366.5 901.4L368.0 898.5L369.5 899.2L371.0 902.7L372.5 901.1L374.0 901.4L375.5 901.7L377.0 900.7L378.5 903.2L380.0 900.9L381.5 899.7L383.0 902.2L384.5 899.2L386.0 899.9L387.5 901.5L389.0 899.9L390.5 900.5L392.0 901.0L393.5 901.6L395.0 901.4L396.5 900.0L398.0 901.3L399.5 901.5L401.0 901.0L402.5 898.4L404.0 901.2L405.5 891.0L407.0 900.1L408.5 897.5L410.0 897.9L411.5 900.9L413.0 897.3L414.5 899.0L416.0 900.8L417.5 898.2L419.0 897.1L420.5 897.2L422.0 898.2L423.5 898.6L425.0 897.8L426.5 898.4L428.0 897.4L429.5 898.0L431.0 896.2L432.5 898.6L434.0 897.8L435.5 898.4L437.0 898.4L438.5 901.5L440.0 897.2L441.5 901.1L443.0 900.1L444.5 897.4L446.0 899.5L447.5 901.5L449.0 899.7L450.5 900.5L452.0 898.8L453.5 896.2L455.0 902.4L456.5 900.3L458.0 900.8L459.5 900.1L461.0 900.9L462.5 900.9L464.0 902.6L465.5 899.9L467.0 900.1L468.5 903.3L470.0 900.4L471.5 902.0L473.0 899.3L474.5 901.3L476.0 898.0L477.5 902.8L479.0 901.5L480.5 900.5L482.0 900.6L483.5 899.9L485.0 900.8L486.5 900.2L488.0 900.3L489.5 900.4L491.0 901.8L492.5 900.9L494.0 899.4L495.5 902.6L497.0 901.0L498.5 900.9L500.0 902.5L501.5 901.8L503.0 900.6L504.5 900.4L506.0 901.4L507.5 899.1L509.0 897.4L510.5 900.3L512.0 898.6L513.5 890.0L515.0 896.4L516.5 898.7L518.0 899.6L519.5 900.1L521.0 897.5L522.5 898.0L524.0 896.3L525.5 897.0L527.0 899.1L528.5 897.7L530.0 897.2L531.5 898.0L533.0 898.0L534.5 897.9L536.0 900.5L537.5 899.3L539.0 897.7L540.5 897.6L542.0 900.6L543.5 899.8L545.0 900.3L546.5 900.9L548.0 901.3L549.5 898.7L551.0 899.9L552.5 900.0L554.0 900.3L555.5 900.0L557.0 890.8L558.5 902.6L560.0 901.8L561.5 901.0L563.0 900.4L564.5 901.2L566.0 899.6L567.5 903.2L569.0 902.5L570.5 900.3L572.0 903.5L573.5 899.8L575.0 900.5L576.5 902.3L578.0 901.7L579.5 900.6L581.0 899.7L582.5 899.1L584.0 900.0L585.5 899.4L587.0 897.6L588.5 896.6L590.0 891.7L591.5 897.6L593.0 898.4L594.5 896.3L596.0 890.4L597.5 900.5L599.0 901.0L600.5 898.5L602.0 898.2L603.5 896.8L605.0 899.4L606.5 898.3L608.0 899.6L609.5 899.9L611.0 898.6L612.5 901.4L614.0 894.5L615.5 897.7L617.0 903.2L618.5 902.9L620.0 902.5L621.5 902.4L623.0 899.0L624.5 899.5L626.0 901.2L627.5 900.5L629.0 899.7L630.5 901.5L632.0 901.9L633.5 898.5L635.0 899.5L636.5 898.7L638.0 899.1L639.5 901.4L641.0 900.8L642.5 896.3L644.0 900.0L645.5 898.0L647.0 898.7L648.5 896.4L650.0 898.5L651.5 896.2L653.0 897.6L654.5 896.1L656.0 899.9L657.5 900.6L659.0 898.4L660.5 901.3L662.0 893.8L663.5 903.0L665.0 903.4L666.5 901.2L668.0 900.4L669.5 893.0L671.0 899.3L672.5 900.9L674.0 900.7L675.5 900.7L677.0 901.6L678.5 902.2L680.0 900.4L681.5 901.4L683.0 901.0L684.5 899.4L686.0 901.6L687.5 900.0L689.0 901.0L690.5 901.2L692.0 900.0L693.5 902.3L695.0 901.0L696.5 900.8L698.0 902.6L699.5 898.3L701.0 901.9L702.5 901.3L704.0 900.0L705.5 898.3L707.0 895.7L708.5 896.8L710.0 895.9L711.5 898.7L713.0 898.2L714.5 897.2L716.0 897.4L717.5 897.6L719.0 891.1L720.5 899.3L722.0 896.3L723.5 897.5L725.0 898.5L726.5 898.5L728.0 896.7L729.5 891.4L731.0 895.8L732.5 897.6L734.0 899.7L735.5 897.4L737.0 899.1L738.5 896.8L740.0 898.6L741.5 898.2L743.0 898.5L744.5 897.6L746.0 899.1L747.5 897.8L749.0 898.0L750.5 898.6L752.0 897.6L753.5 899.3L755.0 898.9L756.5 902.2L758.0 897.0L759.5 900.3L761.0 900.6L762.5 902.4L764.0 902.4L765.5 902.0L767.0 901.2L768.5 903.1L770.0 901.8L771.5 900.1L773.0 901.0L774.5 901.8L776.0 901.3L777.5 900.0L779.0 898.1L780.5 899.4L782.0 896.6L783.5 898.3L785.0 899.1L786.5 898.2L788.0 897.0L789.5 898.7L791.0 897.8L792.5 896.7L794.0 899.7L795.5 897.0L797.0 901.6L798.5 900.1L800.0 895.5L801.5 897.7L803.0 898.3L804.5 893.2L806.0 898.0L807.5 900.1L809.0 898.3L810.5 897.1L812.0 898.7L813.5 896.9L815.0 891.7L816.5 896.4L818.0 897.5L819.5 897.7L821.0 898.0L822.5 899.4L824.0 898.2L825.5 896.5L827.0 898.6L828.5 897.6L830.0 897.5L831.5 897.9L833.0 899.5L834.5 897.9L836.0 898.3L837.5 900.0L839.0 899.6L840.5 899.5L842.0 900.7L843.5 891.5L845.0 902.8L846.5 903.0L848.0 902.5L849.5 901.4L851.0 899.8L852.5 902.2L854.0 902.8L855.5 900.7L857.0 901.1L858.5 900.9L860.0 896.3L861.5 902.9L863.0 902.2L864.5 902.6L866.0 900.9L867.5 898.8L869.0 898.8L870.5 898.7L872.0 899.9L873.5 898.1L875.0 898.5L876.5 899.1L878.0 901.5L879.5 901.3L881.0 901.3L882.5 901.2L884.0 897.7L885.5 895.0L887.0 896.5L888.5 896.8L890.0 890.9L891.5 897.1L893.0 890.7L894.5 898.1L896.0 899.0L897.5 899.2L899.0 896.4L900.5 894.0L902.0 899.6L903.5 897.6L905.0 896.5L906.5 898.2L908.0 900.0L909.5 899.5L911.0 896.5L912.5 897.3L914.0 897.1L915.5 899.0L917.0 897.5L918.5 898.4L920.0 898.5L921.5 899.6L923.0 896.2L924.5 900.3L926.0 900.3L927.5 899.8L929.0 896.8L930.5 896.6L932.0 897.9L933.5 898.4L935.0 899.6L936.5 897.0L938.0 900.2L939.5 898.5L941.0 898.4L942.5 901.5L944.0 896.5L945.5 900.6L947.0 898.0L948.5 897.7L950.0 897.3L951.5 901.2L953.0 899.7L954.5 896.9L956.0 897.3L957.5 900.5L959.0 899.2L960.5 902.2L962.0 902.7L963.5 902.5L965.0 902.0L966.5 902.1L968.0 899.4L969.5 902.8L971.0 900.2L972.5 898.1L974.0 898.6L975.5 898.1L977.0 899.9L978.5 897.5L980.0 891.5L981.5 901.2L983.0 902.1L984.5 902.0L986.0 902.5L987.5 900.4L989.0 895.6L990.5 901.1L992.0 900.1L993.5 899.8L995.0 901.2L996.5 902.2L998.0 901.0L999.5 899.4L1001.0 900.2L1002.5 902.4L1004.0 901.9L1005.5 899.7L1007.0 902.8L1008.5 902.1L1010.0 900.3L1011.5 900.5L1013.0 901.3L1014.5 901.3L1016.0 900.6L1017.5 900.3L1019.0 898.1L1020.5 897.8L1022.0 898.4L1023.5 895.3L1025.0 898.9L1026.5 898.4L1028.0 898.9L1029.5 897.3L1031.0 896.8L1032.5 897.7L1034.0 888.2L1035.5 897.5L1037.0 897.1L1038.5 893.3L1040.0 898.5L1041.5 900.6L1043.0 899.0L1044.5 897.3L1046.0 899.9L1047.5 899.7L1049.0 899.1L1050.5 900.4L1052.0 897.9L1053.5 896.7L1055.0 893.1L1056.5 898.8L1058.0 896.2L1059.5 897.2L1061.0 900.3L1062.5 899.5L1064.0 902.1L1065.5 899.8L1067.0 898.4L1068.5 898.8L1070.0 903.4L1071.5 901.9L1073.0 898.5L1074.5 901.8L1076.0 901.2L1077.5 902.7L1079.0 901.1L1080.5 897.8L1082.0 895.8L1083.5 895.6L1085.0 897.9L1086.5 891.3L1088.0 899.6L1089.5 899.5L1091.0 902.2L1092.5 900.1L1094.0 903.5L1095.5 903.4L1097.0 899.3L1098.5 902.2L1100.0 899.9L1101.5 900.6L1103.0 900.6L1104.5 897.8L1106.0 899.5L1107.5 898.3L1109.0 898.2L1110.5 896.1L1112.0 899.3L1113.5 898.2L1115.0 897.9L1116.5 899.2L1118.0 899.2L1119.5 893.8L1121.0 893.9L1122.5 900.0L1124.0 898.1L1125.5 892.8L1127.0 897.2L1128.5 898.9L1130.0 899.0L1131.5 896.7L1133.0 897.2L1134.5 896.8L1136.0 896.5L1137.5 899.3L1139.0 891.2L1140.5 897.8L1142.0 895.8L1143.5 896.2L1145.0 899.0L1146.5 897.8L1148.0 895.6L1149.5 899.2L1151.0 898.7L1152.5 899.7L1154.0 897.5L1155.5 896.9L1157.0 897.1L1158.5 898.5L1160.0 894.2L1161.5 898.1L1163.0 897.1L1164.5 898.9L1166.0 895.8L1167.5 899.3L1169.0 895.9L1170.5 896.4L1172.0 896.3L1173.5 897.7L1175.0 900.3L1176.5 901.2L1178.0 900.1L1179.5 899.9L1181.0 902.6L1182.5 900.2L1184.0 901.3L1185.5 900.4L1187.0 896.0L1188.5 898.8L1190.0 902.0L1191.5 899.1L1193.0 900.9L1194.5 903.1L1196.0 902.4L1197.5 900.0L1199.0 902.6L1200.5 902.1L1202.0 902.6L1203.5 903.1L1205.0 900.4L1206.5 902.1L1208.0 901.3L1209.5 900.5L1211.0 897.4L1212.5 899.3L1214.0 899.1L1215.5 898.4L1217.0 899.4L1218.5 897.7L1220.0 897.5L1221.5 899.4L1223.0 898.1L1224.5 901.1L1226.0 900.4L1227.5 895.0L1229.0 901.3L1230.5 899.6L1232.0 898.5L1233.5 898.5L1235.0 900.5L1236.5 899.8L1238.0 901.4L1239.5 900.4L1241.0 900.5L1242.5 900.8L1244.0 898.4L1245.5 900.5L1247.0 898.6L1248.5 901.2L1250.0 899.8L1251.5 899.7L1253.0 900.0L1254.5 901.5L1256.0 902.9L1257.5 900.2L1259.0 901.8L1260.5 899.8L1262.0 898.9L1263.5 901.7L1265.0 902.4L1266.5 902.8L1268.0 901.0L1269.5 902.9L1271.0 900.4L1272.5 899.6L1274.0 900.6L1275.5 898.3L1277.0 898.8L1278.5 900.3L1280.0 899.6L1281.5 900.7L1283.0 903.5L1284.5 900.0L1286.0 900.1L1287.5 899.5L1289.0 902.3L1290.5 902.5L1292.0 899.6L1293.5 899.9L1295.0 899.1L1296.5 901.5L1298.0 901.5L1299.5 900.7L1301.0 901.2L1302.5 900.5L1304.0 897.9L1305.5 892.9L1307.0 900.9L1308.5 901.8L1310.0 902.6L1311.5 900.9L1313.0 899.7L1314.5 901.6L1316.0 902.1L1317.5 901.6L1319.0 903.4L1320.5 895.8L1322.0 896.0L1323.5 898.6L1325.0 896.1L1326.5 898.9L1328.0 898.4L1329.5 900.9L1331.0 901.6L1332.5 901.9L1334.0 899.5L1335.5 899.9L1337.0 903.0L1338.5 899.8L1340.0 899.8L1341.5 901.4L1343.0 901.6L1344.5 899.6L1346.0 903.2L1347.5 902.5L1349.0 900.1L1350.5 901.6L1352.0 899.9L1353.5 895.3L1355.0 899.5L1356.5 900.1L1358.0 900.6L1359.5 899.9L1361.0 901.1L1362.5 898.9L1364.0 900.2L1365.5 898.4L1367.0 898.5L1368.5 898.4L1370.0 899.6L1371.5 898.0L1373.0 897.5L1374.5 896.9L1376.0 897.4L1377.5 900.0L1379.0 899.3L1380.5 898.1L1382.0 899.3L1383.5 897.5L1385.0 895.9L1386.5 896.3L1388.0 899.1L1389.5 898.5L1391.0 899.6L1392.5 899.8L1394.0 899.2L1395.5 899.5L1397.0 900.7L1398.5 899.8L1400.0 900.9L1401.5 900.5L1403.0 901.4L1404.5 903.0L1406.0 902.7L1407.5 900.4L1409.0 900.3L1410.5 899.7L1412.0 897.6L1413.5 900.8L1415.0 899.5L1416.5 900.9L1418.0 900.4L1419.5 899.2L1421.0 901.4L1422.5 902.0L1424.0 901.3L1425.5 903.0L1427.0 898.3L1428.5 901.0L1430.0 897.5L1431.5 899.6L1433.0 897.9L1434.5 899.7L1436.0 900.3L1437.5 901.6L1439.0 902.8L1440.5 897.6L1442.0 900.9L1443.5 900.0L1445.0 901.4L1446.5 900.9L1448.0 899.5L1449.5 901.7L1451.0 897.8L1452.5 898.8L1454.0 901.1L1455.5 899.9L1457.0 899.3L1458.5 899.0L1460.0 898.6L1461.5 899.3L1463.0 897.7L1464.5 895.7L1466.0 896.1L1467.5 896.6L1469.0 894.0L1470.5 897.3L1472.0 901.0L1473.5 899.4L1475.0 899.6L1476.5 900.8L1478.0 898.3L1479.5 899.5L1481.0 899.6L1482.5 900.8L1484.0 899.0L1485.5 899.5L1487.0 899.1L1488.5 898.2L1490.0 899.8L1491.5 898.3L1493.0 900.3L1494.5 899.4L1496.0 900.2L1497.5 900.9L1499.0 898.5L1500.5 897.1L1502.0 899.1L1503.5 897.2L1505.0 898.7L1506.5 898.3L1508.0 896.6L1509.5 898.1L1511.0 900.5L1512.5 900.9L1514.0 899.8L1515.5 901.0L1517.0 899.4L1518.5 901.6L1520.0 899.3L1521.5 898.5L1523.0 898.3L1524.5 899.8L1526.0 898.4L1527.5 898.8L1529.0 899.6L1530.5 900.6L1532.0 897.5L1533.5 898.1L1535.0 899.8L1536.5 898.1L1538.0 898.3L1539.5 899.2L1541.0 896.8L1542.5 895.5L1544.0 896.8L1545.5 898.6L1547.0 896.7L1548.5 891.6L1550.0 898.7L1551.5 889.9L1553.0 896.0L1554.5 898.1L1556.0 894.7L1557.5 897.4L1559.0 899.4L1560.5 899.8L1562.0 897.1L1563.5 897.4L1565.0 896.0L1566.5 900.7L1568.0 897.4L1569.5 897.0L1571.0 896.4L1572.5 898.2L1574.0 897.8L1575.5 900.2L1577.0 897.2L1578.5 898.1L1580.0 898.1L1581.5 900.4L1583.0 899.3L1584.5 895.6L1586.0 899.8L1587.5 899.6L1589.0 901.3L1590.5 900.3L1592.0 899.2L1593.5 893.5L1595.0 898.8L1596.5 900.9L1598.0 902.1L1599.5 899.3L1601.0 899.6L1602.5 900.9L1604.0 901.4L1605.5 900.0L1607.0 901.1L1608.5 900.6L1610.0 899.8L1611.5 901.7L1613.0 898.7L1614.5 899.7L1616.0 897.2L1617.5 898.5L1619.0 899.0L1620.5 900.4L1622.0 900.6L1623.5 900.5L1625.0 894.0L1626.5 898.2L1628.0 900.6L1629.5 900.8L1631.0 899.0L1632.5 896.5L1634.0 893.7L1635.5 901.0L1637.0 899.7L1638.5 900.4L1640.0 898.9L1641.5 902.0L1643.0 900.8L1644.5 897.8L1646.0 900.1L1647.5 898.6L1649.0 890.9L1650.5 898.3L1652.0 896.9L1653.5 899.4L1655.0 898.4L1656.5 896.0L1658.0 898.6L1659.5 900.3L1661.0 899.1L1662.5 897.2L1664.0 897.6L1665.5 897.9L1667.0 896.8L1668.5 896.7L1670.0 891.8L1671.5 900.6L1673.0 899.5L1674.5 897.4L1676.0 901.2L1677.5 897.4L1679.0 893.7L1680.5 902.3L1682.0 901.3L1683.5 900.8L1685.0 902.0L1686.5 903.2L1688.0 902.2L1689.5 898.4L1691.0 899.3L1692.5 901.0L1694.0 899.6L1695.5 900.1L1697.0 902.7L1698.5 902.7L1700.0 897.6L1701.5 898.3L1703.0 896.9L1704.5 898.7L1706.0 899.4L1707.5 896.9L1709.0 899.1L1710.5 901.0L1712.0 898.3L1713.5 898.1L1715.0 891.0L1716.5 899.3L1718.0 898.1L1719.5 897.2L1721.0 896.5L1722.5 897.3L1724.0 900.1L1725.5 900.2L1727.0 901.9L1728.5 900.6L1730.0 903.5L1731.5 899.5L1733.0 899.4L1734.5 901.1L1736.0 899.7L1737.5 899.9L1739.0 901.1L1740.5 900.8L1742.0 900.2L1743.5 902.5L1745.0 900.8L1746.5 902.4L1748.0 902.5L1749.5 902.4L1751.0 900.8L1752.5 902.5L1754.0 901.1L1755.5 900.8L1757.0 902.9L1758.5 899.8L1760.0 898.3L1761.5 899.7L1763.0 899.4L1764.5 899.0L1766.0 898.8L1767.5 900.3L1769.0 897.3L1770.5 899.4L1772.0 898.5L1773.5 897.7L1775.0 898.9L1776.5 897.6L1778.0 899.5L1779.5 900.4L1781.0 896.2L1782.5 901.3L1784.0 895.6L1785.5 902.0L1787.0 898.8L1788.5 897.9L1790.0 898.5L1791.5 899.8L1793.0 900.6L1794.5 900.8L1796.0 899.0L1797.5 899.3L1799.0 900.4L1800.5 900.1L1802.0 901.1L1803.5 897.0L1805.0 900.9L1806.5 901.2L1808.0 900.3L1809.5 899.8L1811.0 900.8L1812.5 899.0L1814.0 900.2L1815.5 901.4L1817.0 900.8L1818.5 901.1L1820.0 900.7L1821.5 903.0L1823.0 901.8L1824.5 898.2L1826.0 900.8L1827.5 902.8L1829.0 902.4L1830.5 898.8L1832.0 897.3L1833.5 898.6L1835.0 898.7L1836.5 900.3L1838.0 900.6L1839.5 897.7L1841.0 895.7L1842.5 898.9L1843 913 Z" fill="#2e5b41"/></svg>
<div class="a" style="left:152px;top:892px;width:1691px;height:1px;background:#e0d040;"></div>
<div class="a" style="left:748px;top:858px;width:2px;height:55px;background:#1e4a38;"></div>
<div class="a" style="left:1113px;top:858px;width:2px;height:55px;background:#1e4a38;"></div>
<div class="a" style="left:1124px;top:858px;width:2px;height:55px;background:#1e4a38;"></div>
<div class="a" style="left:1316px;top:858px;width:2px;height:55px;background:#1e4a38;"></div>
<div class="alab" style="left:753px;top:860px">1min Version.mp3</div>
<div class="alab" style="left:1117px;top:860px">1</div>
<div class="alab" style="left:1127px;top:860px">1min Version.mp3</div>
<div class="alab" style="left:1320px;top:860px">1min Version.mp3</div>
<svg class="a" style="left:583px;top:779px" width="18" height="16"><rect x="0.5" y="0.5" width="17" height="15" rx="2" fill="#e4e4e2" stroke="#9a9a9a"/><path d="M4 4 L14 11 M4 11 L14 4" stroke="#8a8a8a" stroke-width="1.2"/><circle cx="4" cy="4" r="2" fill="none" stroke="#8a8a8a"/><circle cx="4" cy="11" r="2" fill="none" stroke="#8a8a8a"/></svg>
<div class="a" style="left:581px;top:606px;width:1px;height:352px;background:#e8503a;"></div>
<svg class="a" style="left:573px;top:590px" width="17" height="18"><path d="M1 1 L16 1 L16 9 L8.5 17 L1 9Z" fill="#3a9ae8" stroke="#1a5a9a" stroke-width="1"/><path d="M5 5 L12 5 M5 8 L12 8" stroke="#fff" stroke-width="1"/></svg>
<svg class="a" style="left:278px;top:801px" width="15" height="14"><path d="M1 1 L6 1 L14 7 L6 13 L1 8Z" fill="#f0f0f0" stroke="#333" stroke-width="1"/><path d="M1 1 L4 7 L1 8" fill="#888"/></svg>
<svg class="a" style="left:1403px;top:644px" width="15" height="14"><path d="M1 1 L6 1 L14 7 L6 13 L1 8Z" fill="#f0f0f0" stroke="#333" stroke-width="1"/><path d="M1 1 L4 7 L1 8" fill="#888"/></svg>
<div class="a" style="left:1843px;top:614px;width:14px;height:344px;background:#888987;"></div>
<div class="a" style="left:1843px;top:614px;width:14px;height:28px;background:#a8a9a7;"></div>
<div class="a" style="left:1857px;top:614px;width:5px;height:344px;background:#6e6f6d;"></div>
<div class="a" style="left:7px;top:958px;width:1836px;height:14px;background:#a9aaa8;"></div>
<div class="a" style="left:29px;top:959px;width:58px;height:12px;background:#878886;"></div>
<svg class="a" style="left:10px;top:960px" width="10" height="10"><path d="M7 1 L2 5 L7 9Z" fill="#6a6a6a"/></svg>
<svg class="a" style="left:49px;top:961px" width="18" height="8"><path d="M1 1V7M3 1V7M5 1V7M7 1V7M9 1V7M11 1V7M13 1V7M15 1V7" stroke="#666" stroke-width="1"/></svg>
<div class="a" style="left:7px;top:972px;width:1909px;height:38px;background:#dcdcda;"></div>
<div class="a" style="left:181px;top:973px;width:1px;height:36px;background:#c0c0be;"></div>
<div class="a" style="left:294px;top:973px;width:1px;height:36px;background:#c0c0be;"></div>
<svg class="a" style="left:18px;top:977px" width="28" height="28" viewBox="0 0 28 28"><path d="M9 9 L18 9 Q25 9 25 16.5 Q25 24 18 24 L12 24" fill="none" stroke="#3a7ac0" stroke-width="3"/><path d="M2 9 L10 2 L10 16Z" fill="#3a7ac0"/></svg>
<div class="a" style="left:53px;top:983px;font-size:13px;color:#333;font-weight:normal;white-space:nowrap;">Undo</div>
<svg class="a" style="left:106px;top:977px" width="28" height="28" viewBox="0 0 28 28"><path d="M19 9 L10 9 Q3 9 3 16.5 Q3 24 10 24 L16 24" fill="none" stroke="#a8c4e0" stroke-width="3"/><path d="M26 9 L18 2 L18 16Z" fill="#a8c4e0"/></svg>
<div class="a" style="left:141px;top:983px;font-size:13px;color:#9a9a9a;font-weight:normal;white-space:nowrap;">Redo</div>
<svg class="a" style="left:194px;top:980px" width="27" height="22" viewBox="0 0 27 22"><rect x="0.5" y="0.5" width="26" height="21" fill="#4a8ad0" stroke="#2a5a9a"/><rect x="1" y="1" width="25" height="3" fill="#2a6ab8"/><g fill="#c8e0f8"><rect x="3" y="6" width="6" height="4"/><rect x="10.5" y="6" width="6" height="4"/><rect x="18" y="6" width="6" height="4"/><rect x="3" y="12" width="6" height="4"/><rect x="10.5" y="12" width="6" height="4"/><rect x="18" y="12" width="6" height="4"/></g></svg>
<div class="a" style="left:228px;top:983px;font-size:13px;color:#333;font-weight:normal;white-space:nowrap;">Organizer</div>
<svg class="a" style="left:306px;top:976px" width="28" height="29" viewBox="0 0 28 29"><path d="M14 1 L27 12 L23 12 L23 28 L5 28 L5 12 L1 12Z" fill="#4a90e0" stroke="#2a5a9a" stroke-width="1"/><rect x="10" y="18" width="8" height="10" fill="#fff"/><rect x="11.5" y="20" width="5" height="8" fill="#2a6ab8"/></svg>
<div class="a" style="left:341px;top:983px;font-size:13px;color:#333;font-weight:normal;white-space:nowrap;">Home Screen</div>
<div class="a" style="left:7px;top:1010px;width:1913px;height:22px;background:#262725;"></div>
<div class="a" style="left:7px;top:1014px;font-size:11.5px;color:#d6d6d6;font-weight:normal;white-space:nowrap;letter-spacing:-0.2px">Click to select, or click in empty space and drag to marquee select. Use Shift, Alt, and Ctrl for other options.</div>
<div class="a" style="left:0px;top:1032px;width:1920px;height:48px;background:linear-gradient(90deg,#4a545c 0%,#535e67 10%,#5c6870 16.5%,#4d5c70 19.5%,#203464 22.5%,#1a2d5c 40%,#172a58 60%,#1b2f5e 72%,#34456a 75%,#4c5868 78.5%,#525e6a 100%);"></div>
<div class="a" style="left:1185px;top:1036px;width:40px;height:39px;background:rgba(160,180,210,0.13);border-radius:4px"></div>
<svg class="a" style="left:708px;top:1043px" width="24" height="24" viewBox="0 0 24 24"><rect x="1" y="1" width="10.5" height="10.5" fill="#6fd0f8"/><rect x="12.5" y="1" width="10.5" height="10.5" fill="#4ab8f0"/><rect x="1" y="12.5" width="10.5" height="10.5" fill="#4ab8f0"/><rect x="12.5" y="12.5" width="10.5" height="10.5" fill="#2aa0e8"/></svg>
<svg class="a" style="left:752px;top:1043px" width="24" height="24" viewBox="0 0 24 24"><path d="M1 4 L9 4 L11 6 L23 6 L23 21 L1 21Z" fill="#f8c040"/><path d="M1 9 L23 9 L23 21 L1 21Z" fill="#ffd860"/><rect x="6" y="15" width="12" height="5" fill="#2a8ae0"/></svg>
<div class="a" style="left:761px;top:1072px;width:6px;height:3px;background:#a0a8b4;border-radius:2px"></div>
<svg class="a" style="left:796px;top:1043px" width="24" height="24" viewBox="0 0 24 24"><rect x="8" y="5" width="15" height="17" rx="1" fill="#1a78d0"/><rect x="1" y="7" width="12" height="12" rx="1.5" fill="#0a5ab0"/><text x="7" y="16.5" font-size="9" font-weight="bold" fill="#fff" text-anchor="middle" font-family="Liberation Sans">O</text><circle cx="19" cy="4.5" r="4.5" fill="#1a7ad8"/><rect x="16.5" y="3" width="5" height="3.5" fill="none" stroke="#fff" stroke-width="0.8"/></svg>
<div class="a" style="left:805px;top:1072px;width:6px;height:3px;background:#a0a8b4;border-radius:2px"></div>
<svg class="a" style="left:840px;top:1043px" width="24" height="24" viewBox="0 0 24 24"><circle cx="16" cy="8" r="3.5" fill="#7b83eb"/><rect x="10" y="10" width="12" height="11" rx="4" fill="#5b5fc7"/><rect x="1" y="7" width="12" height="12" rx="1.5" fill="#4b53bc"/><text x="7" y="16.5" font-size="9" font-weight="bold" fill="#fff" text-anchor="middle" font-family="Liberation Sans">T</text><circle cx="20" cy="4" r="4" fill="#92c353"/><path d="M18 4 L19.5 5.5 L22 2.5" stroke="#fff" stroke-width="1" fill="none"/></svg>
<div class="a" style="left:849px;top:1072px;width:6px;height:3px;background:#a0a8b4;border-radius:2px"></div>
<svg class="a" style="left:884px;top:1043px" width="24" height="24" viewBox="0 0 24 24"><rect x="1" y="1" width="22" height="22" rx="2" fill="#0c0c5a"/><rect x="6" y="6" width="12" height="12" transform="rotate(-20 12 12)" fill="none" stroke="#9fa0f0" stroke-width="1.5"/><circle cx="12" cy="12" r="3" fill="#c0c0ff"/></svg>
<div class="a" style="left:893px;top:1072px;width:6px;height:3px;background:#a0a8b4;border-radius:2px"></div>
<svg class="a" style="left:928px;top:1043px" width="24" height="24" viewBox="0 0 24 24"><circle cx="12" cy="12" r="11" fill="#1a8ad8"/><path d="M3 14 Q4 4 13 3 Q21 3 22 11 Q22 15 17 15 L9 15 Q9 19 14 20 Q8 22 4 18 Z" fill="#50d880"/><path d="M9 13 Q10 8 14 9 Q17 10 16 13Z" fill="#1a5ab8"/></svg>
<div class="a" style="left:937px;top:1072px;width:6px;height:3px;background:#a0a8b4;border-radius:2px"></div>
<svg class="a" style="left:972px;top:1043px" width="24" height="24" viewBox="0 0 24 24"><circle cx="12" cy="12" r="11" fill="#1ed760"/><path d="M5.5 8.5 Q12 6.5 18.5 9.5 M6.5 12 Q12 10.5 17.5 13 M7.5 15.5 Q12 14.5 16.5 16.5" stroke="#111" stroke-width="1.8" fill="none" stroke-linecap="round"/></svg>
<div class="a" style="left:981px;top:1072px;width:6px;height:3px;background:#a0a8b4;border-radius:2px"></div>
<svg class="a" style="left:1016px;top:1043px" width="24" height="24" viewBox="0 0 24 24"><rect x="7" y="2" width="16" height="20" rx="1.5" fill="#2b7cd3"/><rect x="7" y="8" width="16" height="5" fill="#41a5ee"/><rect x="1" y="6" width="12" height="12" rx="1.5" fill="#185abd"/><text x="7" y="15.5" font-size="8" font-weight="bold" fill="#fff" text-anchor="middle" font-family="Liberation Sans">W</text></svg>
<div class="a" style="left:1025px;top:1072px;width:6px;height:3px;background:#a0a8b4;border-radius:2px"></div>
<svg class="a" style="left:1060px;top:1043px" width="24" height="24" viewBox="0 0 24 24"><rect x="1" y="1" width="22" height="22" fill="#1da1f2"/><path d="M5 16 Q9 17 11 15 Q7 14 7 11 Q8 11 9 11 Q6 9 7 6 Q10 9 13 9 Q13 5 16 5 Q18 5 19 6 L21 5.5 L19.5 7.5 Q20 14 14 17 Q9 19 5 16Z" fill="#fff"/></svg>
<div class="a" style="left:1069px;top:1072px;width:6px;height:3px;background:#a0a8b4;border-radius:2px"></div>
<svg class="a" style="left:1104px;top:1043px" width="24" height="24" viewBox="0 0 24 24"><rect x="1" y="1" width="22" height="22" rx="2" fill="#050505"/><rect x="5" y="4" width="3" height="16" fill="#fff"/><rect x="9" y="4" width="9" height="2.5" fill="#fff"/><rect x="9" y="9" width="6" height="2.5" fill="#fff"/><rect x="9" y="14" width="4" height="2" fill="#fff"/></svg>
<div class="a" style="left:1113px;top:1072px;width:6px;height:3px;background:#a0a8b4;border-radius:2px"></div>
<svg class="a" style="left:1148px;top:1043px" width="24" height="24" viewBox="0 0 24 24"><rect x="1" y="1" width="22" height="22" rx="2" fill="#3a1040"/><rect x="7" y="7" width="10" height="10" transform="rotate(-25 12 12)" fill="none" stroke="#d090e0" stroke-width="1.3"/><circle cx="12" cy="12" r="2.5" fill="#e0a0f0"/></svg>
<div class="a" style="left:1157px;top:1072px;width:6px;height:3px;background:#a0a8b4;border-radius:2px"></div>
<svg class="a" style="left:1192px;top:1043px" width="24" height="24" viewBox="0 0 24 24"><path d="M2 2 L20 2 L20 20 L6 20 L6 8 L14 8 L14 14" fill="none" stroke="#2aa8e8" stroke-width="2.6"/><path d="M4 5 L4 22 L22 22 L22 5" fill="none" stroke="#1a88c8" stroke-width="2"/></svg>
<div class="a" style="left:1184px;top:1036px;width:40px;height:39px;background:rgba(255,255,255,0.08);border-radius:4px"></div>
<div class="a" style="left:1195px;top:1072px;width:18px;height:3px;background:#4cc2ff;border-radius:2px"></div>
<div class="a" style="left:1195px;top:1072px;width:20px;height:3px;background:#4cc2ff;border-radius:2px"></div>
<svg class="a" style="left:1666px;top:1050px" width="14" height="9"><path d="M1 8 L7 2 L13 8" stroke="#e8e8e8" stroke-width="1.3" fill="none"/></svg>
<svg class="a" style="left:1688px;top:1048px" width="20" height="13"><path d="M4 12 Q0 12 1 8 Q2 5 5 6 Q6 1 11 1 Q16 1 16 6 Q19 6 19 9 Q19 12 16 12Z" fill="#d0d0d0" stroke="#222" stroke-width="1"/></svg>
<svg class="a" style="left:1712px;top:1048px" width="20" height="13"><path d="M4 12 Q0 12 1 8 Q2 5 5 6 Q6 1 11 1 Q16 1 16 6 Q19 6 19 9 Q19 12 16 12Z" fill="#1a84e0"/></svg>
<svg class="a" style="left:1743px;top:1046px" width="14" height="19"><rect x="4" y="1" width="6" height="11" rx="3" fill="none" stroke="#6ab8e8" stroke-width="1.5"/><path d="M1.5 9 Q1.5 15 7 15 Q12.5 15 12.5 9 M7 15 L7 18" fill="none" stroke="#6ab8e8" stroke-width="1.5"/></svg>
<svg class="a" style="left:1772px;top:1046px" width="18" height="18"><rect x="1" y="4" width="12" height="9" fill="none" stroke="#e8e8e8" stroke-width="1.2"/><path d="M4 16 L10 16 M7 13 L7 16" stroke="#e8e8e8" stroke-width="1.2"/><rect x="13" y="1" width="4" height="6" rx="1" fill="none" stroke="#e8e8e8"/><path d="M15 7 L15 15 L10 15" stroke="#e8e8e8" fill="none"/></svg>
<svg class="a" style="left:1796px;top:1048px" width="18" height="14"><path d="M1 5 L4 5 L8 1.5 L8 12.5 L4 9 L1 9Z" fill="none" stroke="#e8e8e8" stroke-width="1.2"/><path d="M10.5 4.5 Q12 7 10.5 9.5" stroke="#e8e8e8" fill="none"/><path d="M13 3 Q15.5 7 13 11" stroke="#8a949e" fill="none"/></svg>
<div class="a" style="left:1820px;top:1040px;width:60px;text-align:right;font-size:11px;line-height:15px;color:#f0f0f0">6:55 PM<br>11/8/2021</div>
<svg class="a" style="left:1887px;top:1046px" width="16" height="17"><path d="M9 1 Q15 5 13 12 Q10 17 3 15 Q1 14 1 13 Q7 13 9 9 Q11 5 9 1Z" fill="none" stroke="#f0f0f0" stroke-width="1.3"/></svg>
<div class="fence" style="top:11px;height:218px;background:linear-gradient(160deg,#5a6f82 0%,#566a7c 50%,#52667a 100%)"></div>
<svg class="a" style="left:1662px;top:22px" width="17" height="13" viewBox="0 0 17 13"><path d="M0 0 L6 0 L8 2 L17 2 L17 13 L0 13Z" fill="#fff"/></svg>
<div class="a" style="left:1687px;top:18px;font-size:18px;font-weight:normal;-webkit-text-stroke:0.6px #fff;letter-spacing:0.3px;color:#fff;white-space:nowrap">Screenshots</div>
<div class="a" style="left:1568px;top:73px;width:46px;height:24px;box-shadow:0 1px 2px rgba(0,0,0,0.5);overflow:hidden"><div style="position:relative;width:100%;height:100%;background:#142444"><div style="position:absolute;left:2px;top:3px;width:30px;height:4px;background:linear-gradient(90deg,#3a5a8a,#8a8060,#5a7aa0,#a08050)"></div><div style="position:absolute;left:1px;top:9px;width:20px;height:9px;background:linear-gradient(90deg,#6a5a8a,#a07a50,#7a6a90)"></div><div style="position:absolute;left:21px;top:9px;width:11px;height:8px;background:#9a9a30"></div><div style="position:absolute;left:2px;top:19px;width:28px;height:4px;background:linear-gradient(90deg,#8a8a40,#3a5a3a,#6a8aa0)"></div><div style="position:absolute;left:34px;top:6px;width:9px;height:14px;background:repeating-linear-gradient(#14244a 0,#14244a 2px,#3a4a6a 2px,#3a4a6a 3px)"></div></div></div>
<div class="a" style="left:1659px;top:66px;width:46px;height:32px;box-shadow:0 1px 2px rgba(0,0,0,0.5);overflow:hidden"><div style="width:100%;height:100%;background:#f4f4f4"><div style="position:absolute;left:2px;top:2px;width:22px;height:8px;background:#1a60b0"></div><div style="position:absolute;left:2px;top:12px;width:22px;height:8px;background:#6a6a40"></div><div style="position:absolute;left:2px;top:22px;width:22px;height:8px;background:#5a8ac0"></div></div></div>
<div class="a" style="left:1750px;top:57px;width:46px;height:41px;box-shadow:0 1px 2px rgba(0,0,0,0.5);overflow:hidden"><div style="width:100%;height:100%;background:#f2f2f2"><div style="position:absolute;left:0;top:26px;width:46px;height:15px;background:linear-gradient(90deg,#3a4a3a,#2a3a2a 50%,#202040 60%,#4a3a6a)"></div></div></div>
<div class="a" style="left:1841px;top:67px;width:46px;height:31px;box-shadow:0 1px 2px rgba(0,0,0,0.5);overflow:hidden"><div style="position:relative;width:100%;height:100%;background:linear-gradient(#1e3e70 0,#28508a 50%,#d8d8d8 50%,#d8d8d8 56%,#2a2a3a 56%,#3a2a30)"><div style="position:absolute;left:4px;top:4px;width:8px;height:6px;background:#c08040;border-radius:3px"></div><div style="position:absolute;left:16px;top:3px;width:7px;height:7px;background:#a06a50;border-radius:3px"></div><div style="position:absolute;left:28px;top:4px;width:9px;height:6px;background:#6a7aa0;border-radius:3px"></div><div style="position:absolute;left:19px;top:11px;width:8px;height:2px;background:#40b0f0"></div><div style="position:absolute;left:4px;top:21px;width:8px;height:7px;background:#a05030"></div><div style="position:absolute;left:16px;top:21px;width:8px;height:7px;background:#c07040"></div><div style="position:absolute;left:28px;top:21px;width:8px;height:7px;background:#805070"></div></div></div>
<div class="a" style="left:1568px;top:162px;width:46px;height:27px;box-shadow:0 1px 2px rgba(0,0,0,0.5);overflow:hidden"><div style="width:100%;height:100%;background:#f0f0f0"><div style="position:absolute;left:0;top:0;width:46px;height:4px;background:#9a9a9a"></div><div style="position:absolute;left:4px;top:10px;width:14px;height:9px;background:#3a7ad8"></div><div style="position:absolute;left:21px;top:10px;width:14px;height:9px;background:#3a7ad8"></div></div></div>
<div class="a" style="left:1659px;top:154px;width:46px;height:34px;box-shadow:0 1px 2px rgba(0,0,0,0.5);overflow:hidden"><div style="width:100%;height:100%;background:#e4e8ea"><div style="position:absolute;left:5px;top:12px;width:12px;height:9px;background:#7a98b8"></div><div style="position:absolute;left:30px;top:0;width:16px;height:4px;background:#6a8a5a"></div><div style="position:absolute;left:30px;top:30px;width:16px;height:4px;background:#8aa08a"></div></div></div>
<div class="a" style="left:1750px;top:171px;width:46px;height:17px;box-shadow:0 1px 2px rgba(0,0,0,0.5);overflow:hidden"><div style="width:100%;height:100%;background:linear-gradient(90deg,#dadada 0,#c8c8c8 25%,#1a3050 30%,#3a7ad8 55%,#1a3050 75%,#4a6a3a)"></div></div>
<div class="a" style="left:1841px;top:165px;width:46px;height:23px;box-shadow:0 1px 2px rgba(0,0,0,0.5);overflow:hidden"><div style="position:relative;width:100%;height:100%;background:linear-gradient(90deg,#f0f4f8 0,#e0e8f0 45%,#c8d8ea 45%)"><div style="position:absolute;left:22px;top:0;width:20px;height:16px;background:radial-gradient(circle at 40% 60%,#2a6af0,#6aa0f0 50%,#d0e0f0)"></div><div style="position:absolute;left:3px;top:15px;width:6px;height:3px;background:#30c040"></div><div style="position:absolute;left:12px;top:14px;width:12px;height:5px;background:#a0c080"></div><div style="position:absolute;left:34px;top:16px;width:10px;height:6px;background:#202830"></div><div style="position:absolute;left:3px;top:4px;width:5px;height:5px;border-radius:50%;background:#3a7ad8"></div></div></div>
<div class="flab" style="left:1544px;top:104px">Change</div>
<div class="flab" style="left:1635px;top:104px">Change Images</div>
<div class="flab" style="left:1726px;top:104px">Refine Wording</div>
<div class="flab" style="left:1817px;top:104px">Remove Button</div>
<div class="flab" style="left:1544px;top:119px">Background</div>
<div class="flab" style="left:1544px;top:195px">Resize Text</div>
<div class="flab" style="left:1635px;top:195px">Swap Assets</div>
<div class="flab" style="left:1726px;top:195px">Update URL</div>
<div class="flab" style="left:1817px;top:195px">Website Update</div>
<div class="fence" style="top:241px;height:218px;background:linear-gradient(160deg,#5a6e80 0%,#566a7c 50%,#52667a 100%)"></div>
<svg class="a" style="left:1667px;top:252px" width="17" height="13" viewBox="0 0 17 13"><path d="M0 0 L6 0 L8 2 L17 2 L17 13 L0 13Z" fill="#fff"/></svg>
<div class="a" style="left:1692px;top:248px;font-size:18px;font-weight:normal;-webkit-text-stroke:0.6px #fff;letter-spacing:0.3px;color:#fff;white-space:nowrap">Downloads</div>
<svg class="a" style="left:1570px;top:282px" width="46" height="48" viewBox="0 0 46 48"><path d="M23 2 L44 12 L40 38 L22 46 L5 36 L2 12Z" fill="#111"/><path d="M23 5 L41 13 L23 22 L5 13Z" fill="#f04040"/><path d="M5 14 L22 23 L22 43 L7 34Z" fill="#60b8f0"/><path d="M24 23 L41 14 L38 36 L24 43Z" fill="#f8c050"/></svg>
<svg class="a" style="left:1659px;top:282px" width="48" height="48" viewBox="0 0 48 48"><rect x="1" y="6" width="22" height="42" fill="#0e1a2a"/><rect x="22" y="1" width="26" height="47" fill="#e86a10"/><path d="M22 13 A13 13 0 0 0 22 39" fill="none" stroke="#fff" stroke-width="6"/><path d="M24 12 A13 13 0 0 1 36 20" fill="none" stroke="#fff" stroke-width="5"/><path d="M30 26 L37 26" stroke="#fff" stroke-width="4"/><g transform="translate(24,26)"><path d="M0 1 Q5 0 10 -2 Q15 0 20 1 L20 9 Q20 17 10 21 Q0 17 0 9Z" fill="#2a8ae8"/><path d="M10 -2 Q15 0 20 1 L20 9 L10 9Z M0 9 L10 9 L10 21 Q0 17 0 9Z" fill="#f8c820"/></g></svg>
<svg class="a" style="left:1752px;top:288px" width="48" height="44" viewBox="0 0 48 44"><rect x="1" y="2" width="30" height="20" fill="#1a9ae8" stroke="#0a2050" stroke-width="2"/><rect x="16" y="7" width="30" height="22" fill="#2aa0f0" stroke="#0a2050" stroke-width="2"/><rect x="15" y="6" width="10" height="10" fill="#2040a0"/><path d="M18 13 L22 9 M18 9 L18 13 L22 13" stroke="#fff" stroke-width="1.4" fill="none"/><g transform="translate(23,20)"><path d="M0 1 Q5 0 10 -2 Q15 0 20 1 L20 9 Q20 17 10 21 Q0 17 0 9Z" fill="#2a8ae8"/><path d="M10 -2 Q15 0 20 1 L20 9 L10 9Z M0 9 L10 9 L10 21 Q0 17 0 9Z" fill="#f8c820"/></g></svg>
<svg class="a" style="left:1841px;top:282px" width="48" height="48" viewBox="0 0 48 48"><rect x="1" y="1" width="46" height="47" rx="3" fill="#0a4a9a"/><path d="M16 6 L8 16 L13 16 L13 44 L20 44 L20 16 L25 16Z" fill="#2aa8f0"/><path d="M30 6 L22 16 L27 16 L27 44 L34 44 L34 16 L39 16Z" fill="#fff"/><g transform="translate(24,26)"><path d="M0 1 Q5 0 10 -2 Q15 0 20 1 L20 9 Q20 17 10 21 Q0 17 0 9Z" fill="#2a8ae8"/><path d="M10 -2 Q15 0 20 1 L20 9 L10 9Z M0 9 L10 9 L10 21 Q0 17 0 9Z" fill="#f8c820"/></g></svg>
<svg class="a" style="left:1570px;top:375px" width="48" height="46" viewBox="0 0 48 46"><circle cx="22" cy="22" r="21" fill="#fff"/><circle cx="22" cy="22" r="19" fill="#1e90e0"/><path d="M22 3 A19 19 0 0 0 22 41Z" fill="#0e2a5a"/><path d="M16 10 L34 24 L24 25 L20 34Z" fill="#fff"/><g transform="translate(24,24)"><path d="M0 1 Q5 0 10 -2 Q15 0 20 1 L20 9 Q20 17 10 21 Q0 17 0 9Z" fill="#2a8ae8"/><path d="M10 -2 Q15 0 20 1 L20 9 L10 9Z M0 9 L10 9 L10 21 Q0 17 0 9Z" fill="#f8c820"/></g></svg>
<svg class="a" style="left:1659px;top:377px" width="48" height="44" viewBox="0 0 48 44"><rect x="1" y="1" width="46" height="40" fill="#4a7ab0"/><path d="M1 1 L47 1 L47 20 L1 20Z" fill="#4a8ac8"/><circle cx="28" cy="20" r="14" fill="#f8a830"/><circle cx="28" cy="20" r="8" fill="#fff0c0"/><path d="M1 22 L12 14 L22 22 L35 18 L47 24 L47 41 L1 41Z" fill="#c04a20"/><rect x="1" y="33" width="46" height="8" fill="#8a2a10"/><g fill="#fff"><rect x="4" y="35" width="4" height="4"/><rect x="11" y="35" width="4" height="4"/><rect x="18" y="35" width="4" height="4"/><rect x="25" y="35" width="4" height="4"/></g><g transform="translate(24,22)"><path d="M0 1 Q5 0 10 -2 Q15 0 20 1 L20 9 Q20 17 10 21 Q0 17 0 9Z" fill="#2a8ae8"/><path d="M10 -2 Q15 0 20 1 L20 9 L10 9Z M0 9 L10 9 L10 21 Q0 17 0 9Z" fill="#f8c820"/></g></svg>
<svg class="a" style="left:1752px;top:373px" width="46" height="48" viewBox="0 0 46 48"><circle cx="21" cy="26" r="20" fill="#111"/><circle cx="21" cy="26" r="17" fill="#30b0d0"/><path d="M22 2 A22 22 0 0 1 44 24 L22 24Z" fill="#111"/><path d="M24 4 A19 19 0 0 1 42 22 L24 22Z" fill="#e04030"/><g transform="translate(24,26)"><path d="M0 1 Q5 0 10 -2 Q15 0 20 1 L20 9 Q20 17 10 21 Q0 17 0 9Z" fill="#2a8ae8"/><path d="M10 -2 Q15 0 20 1 L20 9 L10 9Z M0 9 L10 9 L10 21 Q0 17 0 9Z" fill="#f8c820"/></g></svg>
<svg class="a" style="left:1841px;top:375px" width="48" height="46" viewBox="0 0 48 46"><path d="M22 1 L45 23 L22 45 L-1 23Z" fill="#d8a850"/><path d="M22 8 L38 23 L22 38 L6 23Z" fill="#8a1a10"/><path d="M13 19 L17 19 L23 13 L23 33 L17 27 L13 27Z" fill="#fff"/><g transform="translate(24,24)"><path d="M0 1 Q5 0 10 -2 Q15 0 20 1 L20 9 Q20 17 10 21 Q0 17 0 9Z" fill="#2a8ae8"/><path d="M10 -2 Q15 0 20 1 L20 9 L10 9Z M0 9 L10 9 L10 21 Q0 17 0 9Z" fill="#f8c820"/></g></svg>
<div class="flab" style="left:1544px;top:334px">objectdesktop...</div>
<div class="flab" style="left:1635px;top:334px">Groupy_setup...</div>
<div class="flab" style="left:1726px;top:334px">Multiplicity3_s...</div>
<div class="flab" style="left:1817px;top:334px">Start11_setup_sd</div>
<div class="flab" style="left:1544px;top:425px">CursorFX4_4.0...</div>
<div class="flab" style="left:1635px;top:425px">DeskScapes11...</div>
<div class="flab" style="left:1726px;top:425px">SpaceMonger...</div>
<div class="flab" style="left:1817px;top:425px">SoundPackag...</div>
<div class="fence" style="top:472px;height:226px;background:radial-gradient(ellipse 160px 120px at 0% 100%,#1a3a78 0%,#2a4a80 35%,rgba(86,106,124,0) 100%),linear-gradient(160deg,#5e7080 0%,#586a7a 60%,#52667a 100%)"></div>
<svg class="a" style="left:1671px;top:482px" width="17" height="13" viewBox="0 0 17 13"><path d="M0 0 L6 0 L8 2 L17 2 L17 13 L0 13Z" fill="#fff"/></svg>
<div class="a" style="left:1696px;top:478px;font-size:18px;font-weight:normal;-webkit-text-stroke:0.6px #fff;letter-spacing:0.3px;color:#fff;white-space:nowrap">Art Assets</div>
<svg class="a" style="left:1570px;top:518px" width="46" height="46" viewBox="0 0 46 46"><defs><linearGradient id="fg" x1="0" y1="0" x2="0" y2="1"><stop offset="0" stop-color="#ffe070"/><stop offset="1" stop-color="#f8b830"/></linearGradient></defs><path d="M1 2 Q1 0 3 0 L16 0 L19 4 L45 4 Q47 4 47 6 L47 34 Q47 36 45 36 L3 36 Q1 36 1 34Z" fill="#f0b030"/><path d="M1 8 Q1 6 3 6 L45 6 Q47 6 47 8 L47 34 Q47 36 45 36 L3 36 Q1 36 1 34Z" fill="#ffd050"/><path d="M1 8 Q1 6 3 6 L45 6 Q47 6 47 8 L47 34 Q47 36 45 36 L3 36 Q1 36 1 34Z" fill="url(#fg)"/><g transform="translate(-1,24)"><circle cx="8" cy="8" r="8" fill="#1a7a3a"/><circle cx="8" cy="8" r="6.5" fill="#fff"/><path d="M4.5 8 L7 10.5 L11.5 5.5" stroke="#1a8a3a" stroke-width="2" fill="none"/></g></svg>
<svg class="a" style="left:1659px;top:512px" width="50" height="50" viewBox="0 0 50 50"><defs><clipPath id="afc"><rect x="1" y="1" width="48" height="48"/></clipPath><linearGradient id="afg" x1="0" y1="0" x2="1" y2="1"><stop offset="0" stop-color="#f8b0f8"/><stop offset="1" stop-color="#e878f0"/></linearGradient></defs><g clip-path="url(#afc)"><rect x="1" y="1" width="48" height="48" fill="url(#afg)"/><path d="M1 1 L20 1 L1 46Z" fill="#8050e0"/><path d="M27.7 33.5 L71.4 -18.6 M19.9 32.1 L86.8 43.9 M17.1 24.6 L40.4 88.5 M22.3 18.5 L-21.4 70.6 M30.1 19.9 L-36.8 8.1 M32.9 27.4 L9.6 -36.5" stroke="#8a3ac0" stroke-width="1.6" fill="none"/></g><g transform="translate(0,32)"><circle cx="8" cy="8" r="8" fill="#1a7a3a"/><circle cx="8" cy="8" r="6.5" fill="#fff"/><path d="M4.5 8 L7 10.5 L11.5 5.5" stroke="#1a8a3a" stroke-width="2" fill="none"/></g></svg>
<svg class="a" style="left:1750px;top:513px" width="48" height="48" viewBox="0 0 48 48"><path d="M10 2 L38 2 L46 10 L46 48 L10 48Z" fill="#2a0e2e"/><path d="M38 2 L46 10 L38 10Z" fill="#e080f0"/><rect x="1" y="4" width="32" height="15" fill="#e070f0"/><text x="17" y="16" font-size="11" font-weight="bold" fill="#3a0a3a" text-anchor="middle" font-family="Liberation Sans">PRE</text><rect x="20" y="23" width="16" height="16" transform="rotate(-30 28 31)" fill="none" stroke="#d8a0e8" stroke-width="1.6"/><circle cx="28" cy="31" r="4" fill="#d8a0e8"/><g transform="translate(0,31)"><circle cx="8" cy="8" r="8" fill="#1a7a3a"/><circle cx="8" cy="8" r="6.5" fill="#fff"/><path d="M4.5 8 L7 10.5 L11.5 5.5" stroke="#1a8a3a" stroke-width="2" fill="none"/></g></svg>
<svg class="a" style="left:1841px;top:513px" width="48" height="48" viewBox="0 0 48 48"><path d="M10 2 L38 2 L46 10 L46 48 L10 48Z" fill="#2a0e2e"/><path d="M38 2 L46 10 L38 10Z" fill="#e080f0"/><rect x="1" y="4" width="32" height="15" fill="#e070f0"/><text x="17" y="16" font-size="11" font-weight="bold" fill="#3a0a3a" text-anchor="middle" font-family="Liberation Sans">PRE</text><rect x="20" y="23" width="16" height="16" transform="rotate(-30 28 31)" fill="none" stroke="#d8a0e8" stroke-width="1.6"/><circle cx="28" cy="31" r="4" fill="#d8a0e8"/><g transform="translate(0,31)"><circle cx="8" cy="8" r="8" fill="#1a7a3a"/><circle cx="8" cy="8" r="6.5" fill="#fff"/><path d="M4.5 8 L7 10.5 L11.5 5.5" stroke="#1a8a3a" stroke-width="2" fill="none"/></g></svg>
<svg class="a" style="left:1568px;top:604px" width="48" height="48" viewBox="0 0 48 48"><path d="M10 2 L38 2 L46 10 L46 48 L10 48Z" fill="#2a0e2e"/><path d="M38 2 L46 10 L38 10Z" fill="#e080f0"/><rect x="1" y="4" width="32" height="15" fill="#e070f0"/><text x="17" y="16" font-size="11" font-weight="bold" fill="#3a0a3a" text-anchor="middle" font-family="Liberation Sans">PRE</text><rect x="20" y="23" width="16" height="16" transform="rotate(-30 28 31)" fill="none" stroke="#d8a0e8" stroke-width="1.6"/><circle cx="28" cy="31" r="4" fill="#d8a0e8"/><g transform="translate(0,31)"><circle cx="8" cy="8" r="8" fill="#1a7a3a"/><circle cx="8" cy="8" r="6.5" fill="#fff"/><path d="M4.5 8 L7 10.5 L11.5 5.5" stroke="#1a8a3a" stroke-width="2" fill="none"/></g></svg>
<svg class="a" style="left:1659px;top:603px" width="50" height="50" viewBox="0 0 50 50"><defs><clipPath id="afc"><rect x="1" y="1" width="48" height="48"/></clipPath><linearGradient id="afg" x1="0" y1="0" x2="1" y2="1"><stop offset="0" stop-color="#f8b0f8"/><stop offset="1" stop-color="#e878f0"/></linearGradient></defs><g clip-path="url(#afc)"><rect x="1" y="1" width="48" height="48" fill="url(#afg)"/><path d="M1 1 L20 1 L1 46Z" fill="#8050e0"/><path d="M27.7 33.5 L71.4 -18.6 M19.9 32.1 L86.8 43.9 M17.1 24.6 L40.4 88.5 M22.3 18.5 L-21.4 70.6 M30.1 19.9 L-36.8 8.1 M32.9 27.4 L9.6 -36.5" stroke="#8a3ac0" stroke-width="1.6" fill="none"/></g><g transform="translate(0,32)"><circle cx="8" cy="8" r="8" fill="#1a7a3a"/><circle cx="8" cy="8" r="6.5" fill="#fff"/><path d="M4.5 8 L7 10.5 L11.5 5.5" stroke="#1a8a3a" stroke-width="2" fill="none"/></g></svg>
<svg class="a" style="left:1750px;top:604px" width="48" height="48" viewBox="0 0 48 48"><path d="M10 2 L38 2 L46 10 L46 48 L10 48Z" fill="#2a0e2e"/><path d="M38 2 L46 10 L38 10Z" fill="#e080f0"/><rect x="1" y="4" width="32" height="15" fill="#e070f0"/><text x="17" y="16" font-size="11" font-weight="bold" fill="#3a0a3a" text-anchor="middle" font-family="Liberation Sans">PRE</text><rect x="20" y="23" width="16" height="16" transform="rotate(-30 28 31)" fill="none" stroke="#d8a0e8" stroke-width="1.6"/><circle cx="28" cy="31" r="4" fill="#d8a0e8"/><g transform="translate(0,31)"><circle cx="8" cy="8" r="8" fill="#1a7a3a"/><circle cx="8" cy="8" r="6.5" fill="#fff"/><path d="M4.5 8 L7 10.5 L11.5 5.5" stroke="#1a8a3a" stroke-width="2" fill="none"/></g></svg>
<svg class="a" style="left:1841px;top:603px" width="50" height="50" viewBox="0 0 50 50"><defs><clipPath id="afc"><rect x="1" y="1" width="48" height="48"/></clipPath><linearGradient id="afg" x1="0" y1="0" x2="1" y2="1"><stop offset="0" stop-color="#f8b0f8"/><stop offset="1" stop-color="#e878f0"/></linearGradient></defs><g clip-path="url(#afc)"><rect x="1" y="1" width="48" height="48" fill="url(#afg)"/><path d="M1 1 L20 1 L1 46Z" fill="#8050e0"/><path d="M27.7 33.5 L71.4 -18.6 M19.9 32.1 L86.8 43.9 M17.1 24.6 L40.4 88.5 M22.3 18.5 L-21.4 70.6 M30.1 19.9 L-36.8 8.1 M32.9 27.4 L9.6 -36.5" stroke="#8a3ac0" stroke-width="1.6" fill="none"/></g><g transform="translate(0,32)"><circle cx="8" cy="8" r="8" fill="#1a7a3a"/><circle cx="8" cy="8" r="6.5" fill="#fff"/><path d="M4.5 8 L7 10.5 L11.5 5.5" stroke="#1a8a3a" stroke-width="2" fill="none"/></g></svg>
<div class="flab" style="left:1544px;top:565px">Layouts</div>
<div class="flab" style="left:1635px;top:565px">Approved Logos</div>
<div class="flab" style="left:1726px;top:565px">Asset B-roll</div>
<div class="flab" style="left:1817px;top:565px">Commercial</div>
<div class="flab" style="left:1817px;top:580px">Final</div>
<div class="flab" style="left:1544px;top:656px">Corporate</div>
<div class="flab" style="left:1635px;top:656px">Green Check</div>
<div class="flab" style="left:1726px;top:656px">Pilot Production</div>
<div class="flab" style="left:1817px;top:656px">Red X</div>
<div class="flab" style="left:1544px;top:671px">A-Roll</div>
<div class="fence" style="top:786px;height:221px;background:radial-gradient(ellipse 110px 70px at 0% 100%,rgba(80,96,116,0.85) 0%,rgba(80,96,116,0) 100%),linear-gradient(107deg,#0a2258 0%,#0e2862 11%,#22406e 22%,#42587a 32%,#566879 42%,#5e6e7e 55%,#5e6e7e 100%)"></div>
<svg class="a" style="left:1582px;top:794px" width="17" height="13" viewBox="0 0 17 13"><path d="M0 0 L6 0 L8 2 L17 2 L17 13 L0 13Z" fill="#fff"/></svg>
<div class="a" style="left:1601px;top:790px;font-size:18px;font-weight:normal;-webkit-text-stroke:0.6px #fff;letter-spacing:0.3px;color:#fff;white-space:nowrap">OneDrive - Stardock Corporation</div>
<svg class="a" style="left:1571px;top:832px" width="46" height="44" viewBox="0 0 46 44"><g transform="scale(0.875 0.92)"><defs><linearGradient id="fg" x1="0" y1="0" x2="0" y2="1"><stop offset="0" stop-color="#ffe070"/><stop offset="1" stop-color="#f8b830"/></linearGradient></defs><path d="M1 2 Q1 0 3 0 L16 0 L19 4 L45 4 Q47 4 47 6 L47 34 Q47 36 45 36 L3 36 Q1 36 1 34Z" fill="#f0b030"/><path d="M1 8 Q1 6 3 6 L45 6 Q47 6 47 8 L47 34 Q47 36 45 36 L3 36 Q1 36 1 34Z" fill="#ffd050"/><path d="M1 8 Q1 6 3 6 L45 6 Q47 6 47 8 L47 34 Q47 36 45 36 L3 36 Q1 36 1 34Z" fill="url(#fg)"/></g><g transform="translate(-2,29)"><path d="M4 12 Q0 12 0.5 8.5 Q1 6 4 6.5 Q5 2 10 2 Q15 2 15 7 Q18 7 18 9.5 Q18 12 15 12Z" fill="#fff" stroke="#1a6ac8" stroke-width="1.2"/></g></svg>
<svg class="a" style="left:1662px;top:832px" width="46" height="44" viewBox="0 0 46 44"><g transform="scale(0.875 0.92)"><defs><linearGradient id="fg" x1="0" y1="0" x2="0" y2="1"><stop offset="0" stop-color="#ffe070"/><stop offset="1" stop-color="#f8b830"/></linearGradient></defs><path d="M1 2 Q1 0 3 0 L16 0 L19 4 L45 4 Q47 4 47 6 L47 34 Q47 36 45 36 L3 36 Q1 36 1 34Z" fill="#f0b030"/><path d="M1 8 Q1 6 3 6 L45 6 Q47 6 47 8 L47 34 Q47 36 45 36 L3 36 Q1 36 1 34Z" fill="#ffd050"/><path d="M1 8 Q1 6 3 6 L45 6 Q47 6 47 8 L47 34 Q47 36 45 36 L3 36 Q1 36 1 34Z" fill="url(#fg)"/></g><g transform="translate(-2,26)"><circle cx="8" cy="8" r="8" fill="#1a7a3a"/><circle cx="8" cy="8" r="6.5" fill="#fff"/><path d="M4.5 8 L7 10.5 L11.5 5.5" stroke="#1a8a3a" stroke-width="2" fill="none"/></g></svg>
<svg class="a" style="left:1753px;top:832px" width="46" height="44" viewBox="0 0 46 44"><g transform="scale(0.875 0.92)"><defs><linearGradient id="fg" x1="0" y1="0" x2="0" y2="1"><stop offset="0" stop-color="#ffe070"/><stop offset="1" stop-color="#f8b830"/></linearGradient></defs><path d="M1 2 Q1 0 3 0 L16 0 L19 4 L45 4 Q47 4 47 6 L47 34 Q47 36 45 36 L3 36 Q1 36 1 34Z" fill="#f0b030"/><path d="M1 8 Q1 6 3 6 L45 6 Q47 6 47 8 L47 34 Q47 36 45 36 L3 36 Q1 36 1 34Z" fill="#ffd050"/><path d="M1 8 Q1 6 3 6 L45 6 Q47 6 47 8 L47 34 Q47 36 45 36 L3 36 Q1 36 1 34Z" fill="url(#fg)"/></g><g transform="translate(-2,26)"><circle cx="8" cy="8" r="8" fill="#1a7a3a"/><circle cx="8" cy="8" r="6.5" fill="#fff"/><path d="M4.5 8 L7 10.5 L11.5 5.5" stroke="#1a8a3a" stroke-width="2" fill="none"/></g></svg>
<svg class="a" style="left:1844px;top:832px" width="46" height="44" viewBox="0 0 46 44"><g transform="scale(0.875 0.92)"><defs><linearGradient id="fg" x1="0" y1="0" x2="0" y2="1"><stop offset="0" stop-color="#ffe070"/><stop offset="1" stop-color="#f8b830"/></linearGradient></defs><path d="M1 2 Q1 0 3 0 L16 0 L19 4 L45 4 Q47 4 47 6 L47 34 Q47 36 45 36 L3 36 Q1 36 1 34Z" fill="#f0b030"/><path d="M1 8 Q1 6 3 6 L45 6 Q47 6 47 8 L47 34 Q47 36 45 36 L3 36 Q1 36 1 34Z" fill="#ffd050"/><path d="M1 8 Q1 6 3 6 L45 6 Q47 6 47 8 L47 34 Q47 36 45 36 L3 36 Q1 36 1 34Z" fill="url(#fg)"/></g><g transform="translate(-2,26)"><circle cx="8" cy="8" r="8" fill="#1a7a3a"/><circle cx="8" cy="8" r="6.5" fill="#fff"/><path d="M4.5 8 L7 10.5 L11.5 5.5" stroke="#1a8a3a" stroke-width="2" fill="none"/></g></svg>
<div class="flab" style="left:1544px;top:877px">Attachments</div>
<div class="flab" style="left:1635px;top:877px">Clients</div>
<div class="flab" style="left:1726px;top:877px">Data Projects</div>
<div class="flab" style="left:1817px;top:877px">External Share</div>
<svg class="a" style="left:1571px;top:923px" width="46" height="44" viewBox="0 0 46 44"><g transform="scale(0.875 0.92)"><defs><linearGradient id="fg" x1="0" y1="0" x2="0" y2="1"><stop offset="0" stop-color="#ffe070"/><stop offset="1" stop-color="#f8b830"/></linearGradient></defs><path d="M1 2 Q1 0 3 0 L16 0 L19 4 L45 4 Q47 4 47 6 L47 34 Q47 36 45 36 L3 36 Q1 36 1 34Z" fill="#f0b030"/><path d="M1 8 Q1 6 3 6 L45 6 Q47 6 47 8 L47 34 Q47 36 45 36 L3 36 Q1 36 1 34Z" fill="#ffd050"/><path d="M1 8 Q1 6 3 6 L45 6 Q47 6 47 8 L47 34 Q47 36 45 36 L3 36 Q1 36 1 34Z" fill="url(#fg)"/></g><g transform="translate(-2,26)"><circle cx="8" cy="8" r="8" fill="#1a7a3a"/><circle cx="8" cy="8" r="6.5" fill="#fff"/><path d="M4.5 8 L7 10.5 L11.5 5.5" stroke="#1a8a3a" stroke-width="2" fill="none"/></g></svg>
<svg class="a" style="left:1662px;top:923px" width="46" height="44" viewBox="0 0 46 44"><g transform="scale(0.875 0.92)"><defs><linearGradient id="fg" x1="0" y1="0" x2="0" y2="1"><stop offset="0" stop-color="#ffe070"/><stop offset="1" stop-color="#f8b830"/></linearGradient></defs><path d="M1 2 Q1 0 3 0 L16 0 L19 4 L45 4 Q47 4 47 6 L47 34 Q47 36 45 36 L3 36 Q1 36 1 34Z" fill="#f0b030"/><path d="M1 8 Q1 6 3 6 L45 6 Q47 6 47 8 L47 34 Q47 36 45 36 L3 36 Q1 36 1 34Z" fill="#ffd050"/><path d="M1 8 Q1 6 3 6 L45 6 Q47 6 47 8 L47 34 Q47 36 45 36 L3 36 Q1 36 1 34Z" fill="url(#fg)"/></g><g transform="translate(-2,29)"><path d="M4 12 Q0 12 0.5 8.5 Q1 6 4 6.5 Q5 2 10 2 Q15 2 15 7 Q18 7 18 9.5 Q18 12 15 12Z" fill="#fff" stroke="#1a6ac8" stroke-width="1.2"/></g></svg>
<svg class="a" style="left:1753px;top:923px" width="46" height="44" viewBox="0 0 46 44"><g transform="scale(0.875 0.92)"><defs><linearGradient id="fg" x1="0" y1="0" x2="0" y2="1"><stop offset="0" stop-color="#ffe070"/><stop offset="1" stop-color="#f8b830"/></linearGradient></defs><path d="M1 2 Q1 0 3 0 L16 0 L19 4 L45 4 Q47 4 47 6 L47 34 Q47 36 45 36 L3 36 Q1 36 1 34Z" fill="#f0b030"/><path d="M1 8 Q1 6 3 6 L45 6 Q47 6 47 8 L47 34 Q47 36 45 36 L3 36 Q1 36 1 34Z" fill="#ffd050"/><path d="M1 8 Q1 6 3 6 L45 6 Q47 6 47 8 L47 34 Q47 36 45 36 L3 36 Q1 36 1 34Z" fill="url(#fg)"/></g><g transform="translate(-2,26)"><circle cx="8" cy="8" r="8" fill="#1a7a3a"/><circle cx="8" cy="8" r="6.5" fill="#fff"/><path d="M4.5 8 L7 10.5 L11.5 5.5" stroke="#1a8a3a" stroke-width="2" fill="none"/></g></svg>
<svg class="a" style="left:1844px;top:923px" width="46" height="44" viewBox="0 0 46 44"><g transform="scale(0.875 0.92)"><defs><linearGradient id="fg" x1="0" y1="0" x2="0" y2="1"><stop offset="0" stop-color="#ffe070"/><stop offset="1" stop-color="#f8b830"/></linearGradient></defs><path d="M1 2 Q1 0 3 0 L16 0 L19 4 L45 4 Q47 4 47 6 L47 34 Q47 36 45 36 L3 36 Q1 36 1 34Z" fill="#f0b030"/><path d="M1 8 Q1 6 3 6 L45 6 Q47 6 47 8 L47 34 Q47 36 45 36 L3 36 Q1 36 1 34Z" fill="#ffd050"/><path d="M1 8 Q1 6 3 6 L45 6 Q47 6 47 8 L47 34 Q47 36 45 36 L3 36 Q1 36 1 34Z" fill="url(#fg)"/></g><g transform="translate(-2,29)"><path d="M4 12 Q0 12 0.5 8.5 Q1 6 4 6.5 Q5 2 10 2 Q15 2 15 7 Q18 7 18 9.5 Q18 12 15 12Z" fill="#fff" stroke="#1a6ac8" stroke-width="1.2"/></g></svg>
<div class="flab" style="left:1544px;top:968px">Interviews</div>
<div class="flab" style="left:1635px;top:968px">Microsoft Teams</div>
<div class="flab" style="left:1726px;top:968px">OBNT</div>
<div class="flab" style="left:1817px;top:968px">Products</div>
<div class="flab" style="left:1635px;top:983px">Chat Files</div>
</body></html>
